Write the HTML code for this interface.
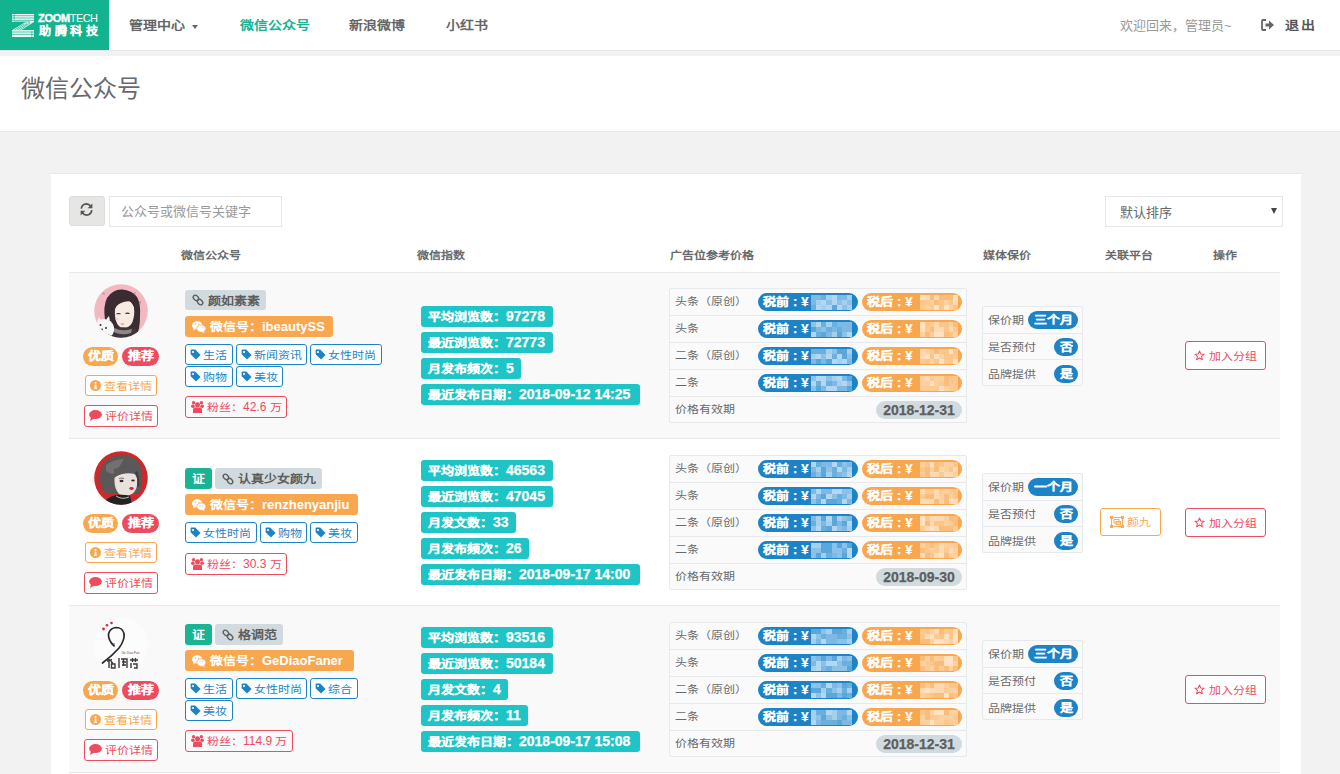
<!DOCTYPE html>
<html lang="zh-CN">
<head>
<meta charset="utf-8">
<style>
*{box-sizing:border-box;margin:0;padding:0}
html,body{width:1340px;height:774px;overflow:hidden}
body{font-family:"Liberation Sans",sans-serif;background:#f3f2f3;color:#676a6c;font-size:13px;position:relative}
.a{position:absolute}
.fx{position:absolute;display:flex;align-items:center;white-space:nowrap}
.nav{position:absolute;left:0;top:0;width:1340px;height:50px;background:#fff}
.logo{position:absolute;left:0;top:0;width:109px;height:50px;background:#12b48f}
.band{position:absolute;left:0;top:50px;width:1340px;height:6px;background:#f3f2f3;border-top:1px solid #e6e5e7}
.navi{position:absolute;top:17px;font-size:14px;font-weight:bold;color:#666;line-height:18px;white-space:nowrap}
.hdr{position:absolute;left:0;top:56px;width:1340px;height:76px;background:#fff;border-bottom:1px solid #e7eaec}
.title{position:absolute;left:21px;top:74px;font-size:24px;color:#676a6c;line-height:30px;font-weight:normal}
.panel{position:absolute;left:51px;top:173px;width:1250px;height:610px;background:#fff;border-top:1px solid #e7eaec}
.th{position:absolute;top:248px;font-size:12px;font-weight:bold;color:#676a6c;line-height:16px;white-space:nowrap}
.row{position:absolute;left:69px;width:1211px;border-top:1px solid #e7eaec}
.bdg{padding-bottom:3px;height:19px;border-radius:10px;color:#fff;font-weight:bold;font-size:13px;justify-content:center;-webkit-text-stroke:0.3px #fff}
.ob{padding-bottom:1px;border:1px solid;border-radius:3px;font-size:12px;justify-content:center;background:#fff}
.lab{padding-bottom:0;border-radius:3px;font-weight:bold;font-size:13px;padding-left:7px}
.tg{padding-bottom:1px;height:21px;border:1px solid #1c84c6;border-radius:3px;font-size:12px;color:#1c84c6;padding-left:4px;background:#fff}
.cy{height:21px;background:#1fc5c6;color:#fff;border-radius:3px;font-weight:bold;font-size:13px;padding-left:7px;padding-bottom:1px;-webkit-text-stroke:0.25px #fff}
.pbox{position:absolute;border:1px solid #e7eaec;border-radius:2px;background:#fbfafb}
.prow{position:absolute;left:0;border-bottom:1px solid #e7eaec;width:100%}
.pl{position:absolute;font-size:12px;color:#676a6c;white-space:nowrap;line-height:16px}
.pill{height:18px;border-radius:9px;color:#fff;font-weight:bold;font-size:13px;padding-left:5px;padding-bottom:2px;overflow:hidden;-webkit-text-stroke:0.25px currentColor}
.cl{margin:0 4px 0 4px}
.z{display:inline-block;transform:scaleY(.86)}
.n{font-size:14px}
</style>
</head>
<body>
<div class="nav">
<div class="logo"></div>
<svg class="a" style="left:0;top:0" width="109" height="50" viewBox="0 0 109 50">
<g fill="#fff">
<rect x="12" y="14" width="22" height="1.4"/><rect x="12" y="16.2" width="22" height="1.4"/><rect x="12" y="18.4" width="22" height="1.4"/><rect x="12" y="20.6" width="22" height="1.3"/>
<rect x="12" y="30.2" width="22" height="1.4"/><rect x="12" y="32.4" width="22" height="1.4"/><rect x="12" y="34.6" width="22" height="1.4"/><rect x="12" y="36" width="22" height="1"/>
<path d="M25.5 21.9 L34 21.9 L21 30.2 L12 30.2 Z" opacity="0.85"/>
</g>
<g stroke="#12b48f" stroke-width="0.7">
<path d="M14 21.9 L30 21.9" /><path d="M27 23.6 L17 30" /><path d="M30 23 L19.5 30" /><path d="M24 24 L14.5 30"/>
<path d="M14.2 14 L14.2 19.5"/><path d="M31.8 31 L31.8 37"/>
</g>
</svg>
<div class="a" style="left:38px;top:12px;font-size:11px;line-height:12px;color:#fff;white-space:nowrap;letter-spacing:-0.3px"><b style="font-weight:bold;-webkit-text-stroke:0.4px #fff">ZOOM</b><span style="font-weight:normal;letter-spacing:-0.6px">TECH</span></div>
<div class="a" style="left:39px;top:23.5px;font-size:12px;line-height:15px;color:#fff;font-weight:bold;white-space:nowrap;letter-spacing:3.6px;-webkit-text-stroke:0.2px #fff"><span class="z" style="transform:scaleY(.95)">助腾科技</span></div>
<div class="navi" style="left:129px"><span class="z">管理中心</span></div>
<div class="a" style="left:192px;top:25px;width:0;height:0;border-left:3.5px solid transparent;border-right:3.5px solid transparent;border-top:4px solid #666"></div>
<div class="navi" style="left:240px;color:#1ab394"><span class="z">微信公众号</span></div>
<div class="navi" style="left:349px"><span class="z">新浪微博</span></div>
<div class="navi" style="left:446px"><span class="z">小红书</span></div>
<div class="navi" style="left:1120px;font-weight:normal;color:#999;font-size:13px;top:17px">欢迎回来，管理员~</div>
<div class="a" style="left:1261px;top:19px"><svg width="14" height="12" viewBox="0 0 14 12" style="display:block;"><path d="M5 1 L2 1 Q1 1 1 2 L1 10 Q1 11 2 11 L5 11" fill="none" stroke="#666" stroke-width="1.8"/><path d="M4.5 4.4 L8 4.4 L8 1.6 L13 6 L8 10.4 L8 7.6 L4.5 7.6 Z" fill="#666"/></svg></div>
<div class="navi" style="left:1285px;color:#555;letter-spacing:1.5px"><span class="z">退出</span></div>
</div>
<div class="band"></div><div class="hdr"></div><div class="title">微信公众号</div>
<div class="panel"></div>
<div class="fx" style="left:69px;top:196px;width:36px;height:30px;background:#e6e6e4;border:1px solid #dcdcda;border-radius:3px;justify-content:center;padding-bottom:3px;padding-right:2px"><svg width="13" height="13" viewBox="0 0 13 13" style="display:block;"><path d="M1.3 5.6 Q2 1 6.5 0.9 Q9 1 10.6 3.2" fill="none" stroke="#555" stroke-width="1.7"/><path d="M12.4 0.4 L12.4 5.2 L7.6 5.2 Z" fill="#555"/><path d="M11.8 7.2 Q11 12 6.5 12.1 Q4 12 2.4 9.8" fill="none" stroke="#555" stroke-width="1.7"/><path d="M0.6 12.6 L0.6 7.8 L5.4 7.8 Z" fill="#555"/></svg></div>
<div class="fx" style="left:109px;top:196px;width:173px;height:31px;border:1px solid #e5e6e7;background:#fff;padding-left:11px;padding-bottom:3px;font-size:13px;color:#999">公众号或微信号关键字</div>
<div class="fx" style="left:1105px;top:196px;width:178px;height:31px;border:1px solid #e5e6e7;background:#fff;padding-left:14px;font-size:13px;color:#676a6c">默认排序</div>
<div class="a" style="left:1271px;top:208px;width:0;height:0;border-left:3.5px solid transparent;border-right:3.5px solid transparent;border-top:6px solid #444"></div>
<div class="th" style="left:181px"><span class="z">微信公众号</span></div>
<div class="th" style="left:417px"><span class="z">微信指数</span></div>
<div class="th" style="left:670px"><span class="z">广告位参考价格</span></div>
<div class="th" style="left:983px"><span class="z">媒体保价</span></div>
<div class="th" style="left:1105px"><span class="z">关联平台</span></div>
<div class="th" style="left:1213px"><span class="z">操作</span></div>
<div class="row" style="top:272px;height:166px;background:#faf9fa"></div>
<div class="a" style="left:94px;top:284px"><svg width="54" height="54" viewBox="0 0 54 54" style="display:block">
<defs><clipPath id="c1"><circle cx="27" cy="27" r="26.8"/></clipPath></defs>
<g clip-path="url(#c1)">
<rect width="54" height="54" fill="#f4b8c0"/>
<path d="M11 36 Q9 22 13 14 Q19 5 28 5.5 Q38 6 43 13 Q47 20 46 32 Q46 42 44 48 L36 50 L16 48 Q12 44 11 36 Z" fill="#3a2c31"/>
<path d="M21.5 22 Q24 15 32 15.5 Q38 17 40 23 Q41 31 38.5 38 Q35.5 44 29.5 44 Q24 43.5 22 37 Q20 30 21.5 22 Z" fill="#f8ece2"/>
<path d="M19 24 Q22 13 31 12.5 Q37 13 39 18 Q33 16 27 19 Q22 21 20 27 Z" fill="#3a2c31"/>
<path d="M39 17 Q42 21 42 27 L40.5 26 Q40 21 37 18 Z" fill="#3a2c31"/>
<path d="M22.5 30 Q24.5 29 26.5 30" stroke="#2a2226" stroke-width="1.1" fill="none"/>
<path d="M31.5 29.6 Q33.5 28.6 35.5 29.6" stroke="#2a2226" stroke-width="1.1" fill="none"/>
<ellipse cx="28.5" cy="40" rx="2" ry="0.8" fill="#e7938a"/>
<ellipse cx="23" cy="35" rx="1.8" ry="1" fill="#f6cfc8"/>
<path d="M15 46 Q27 41 42 45 L44 54 L13 54 Z" fill="#3f3739"/>
<path d="M20 44 Q28 48 38 45 L37 49 Q28 52 20 48 Z" fill="#8f8789"/>
<path d="M0 43 Q3 35 10 35 Q18 35.5 20 43 Q21 51 14 54 L0 54 Z" fill="#f7f7f7"/>
<path d="M3 37 L5 33 L7 36.5 Z" fill="#f7f7f7"/><path d="M12 35.5 L15 32 L16 37 Z" fill="#f7f7f7"/>
<circle cx="6.5" cy="41" r="1" fill="#333"/><circle cx="8" cy="45.5" r="1" fill="#333"/><circle cx="12" cy="44" r="1" fill="#333"/>
<path d="M8 10 L10 8 L11 11 Z" fill="#9c8f86" opacity="0.7"/><path d="M39 9 L42 8 L41 11 Z" fill="#9c8f86" opacity="0.7"/>
<path d="M45 18 L47 17 L46.5 20 Z" fill="#c65d6c" opacity="0.8"/>
</g></svg></div>
<div class="fx bdg" style="left:83px;top:347px;width:35px;height:19px;background:#f9a74f"><span class="z">优质</span></div>
<div class="fx bdg" style="left:122px;top:347px;width:37px;height:19px;background:#ee4b5e"><span class="z">推荐</span></div>
<div class="fx ob" style="left:85px;top:375px;width:72px;height:21px;border-color:#f9a74f;color:#f9a74f"><span style="margin-right:3px"><svg width="11" height="11" viewBox="0 0 12 12" style="display:block;"><circle cx="6" cy="6" r="6" fill="#f9a74f"/><rect x="5" y="5" width="2" height="4.4" fill="#fff"/><rect x="4.2" y="8.6" width="3.6" height="1" fill="#fff"/><circle cx="6" cy="3.2" r="1.1" fill="#fff"/></svg></span><span class="z">查看详情</span></div>
<div class="fx ob" style="left:84px;top:405px;width:74px;height:22px;border-color:#ee4b5e;color:#ee4b5e"><span style="margin-right:3px"><svg width="13" height="11" viewBox="0 0 13 11" style="display:block;"><ellipse cx="6.5" cy="4.6" rx="6.4" ry="4.5" fill="#ee4b5e"/><path d="M2 7 L1 11 L5.5 8.5 Z" fill="#ee4b5e"/></svg></span><span class="z">评价详情</span></div>
<div class="fx lab" style="left:185px;top:290px;width:81px;height:20px;background:#d1dade;color:#5e5e5e"><span style="margin-right:4px"><svg width="12" height="12" viewBox="0 0 12 12" style="display:block;"><ellipse cx="3.9" cy="3.9" rx="3" ry="2.2" transform="rotate(45 3.9 3.9)" fill="none" stroke="#5e5e5e" stroke-width="1.4"/><ellipse cx="8.1" cy="8.1" rx="3" ry="2.2" transform="rotate(45 8.1 8.1)" fill="none" stroke="#5e5e5e" stroke-width="1.4"/></svg></span><span class="z">颜如素素</span></div>
<div class="fx lab" style="left:185px;top:316px;width:148px;height:21px;background:#f9a74f;color:#fff"><span style="margin-right:4px"><svg width="14" height="12" viewBox="0 0 14 12" style="display:block;"><ellipse cx="5.2" cy="4.4" rx="5.2" ry="4.2" fill="#fff"/><path d="M1.6 6.8 L1.2 9.2 L4 7.8 Z" fill="#fff"/><ellipse cx="9.4" cy="7.6" rx="4.6" ry="3.7" fill="#fff" stroke="#f9a74f" stroke-width="0.8"/><path d="M11.8 10 L12.6 12 L10.2 11 Z" fill="#fff"/><circle cx="3.5" cy="3.2" r="0.6" fill="#f9a74f"/><circle cx="6.8" cy="3.2" r="0.6" fill="#f9a74f"/><circle cx="8" cy="6.8" r="0.5" fill="#f9a74f"/><circle cx="10.8" cy="6.8" r="0.5" fill="#f9a74f"/></svg></span><span class="z">微信号：</span>ibeautySS</div>
<div class="fx tg" style="left:185px;top:344px;width:48px;height:21px;"><span style="margin-right:2px"><svg width="11" height="11" viewBox="0 0 11 11" style="display:block;"><path d="M0.6 1.4 Q0.6 0.6 1.4 0.6 L5.2 0.6 L10.6 6 L6 10.6 L0.6 5.2 Z" fill="#1c84c6"/><circle cx="3" cy="3" r="1.1" fill="#fff"/></svg></span><span class="z">生活</span></div>
<div class="fx tg" style="left:236px;top:344px;width:71px;height:21px;"><span style="margin-right:2px"><svg width="11" height="11" viewBox="0 0 11 11" style="display:block;"><path d="M0.6 1.4 Q0.6 0.6 1.4 0.6 L5.2 0.6 L10.6 6 L6 10.6 L0.6 5.2 Z" fill="#1c84c6"/><circle cx="3" cy="3" r="1.1" fill="#fff"/></svg></span><span class="z">新闻资讯</span></div>
<div class="fx tg" style="left:310px;top:344px;width:72px;height:21px;"><span style="margin-right:2px"><svg width="11" height="11" viewBox="0 0 11 11" style="display:block;"><path d="M0.6 1.4 Q0.6 0.6 1.4 0.6 L5.2 0.6 L10.6 6 L6 10.6 L0.6 5.2 Z" fill="#1c84c6"/><circle cx="3" cy="3" r="1.1" fill="#fff"/></svg></span><span class="z">女性时尚</span></div>
<div class="fx tg" style="left:185px;top:366px;width:48px;height:21px;"><span style="margin-right:2px"><svg width="11" height="11" viewBox="0 0 11 11" style="display:block;"><path d="M0.6 1.4 Q0.6 0.6 1.4 0.6 L5.2 0.6 L10.6 6 L6 10.6 L0.6 5.2 Z" fill="#1c84c6"/><circle cx="3" cy="3" r="1.1" fill="#fff"/></svg></span><span class="z">购物</span></div>
<div class="fx tg" style="left:236px;top:366px;width:47px;height:21px;"><span style="margin-right:2px"><svg width="11" height="11" viewBox="0 0 11 11" style="display:block;"><path d="M0.6 1.4 Q0.6 0.6 1.4 0.6 L5.2 0.6 L10.6 6 L6 10.6 L0.6 5.2 Z" fill="#1c84c6"/><circle cx="3" cy="3" r="1.1" fill="#fff"/></svg></span><span class="z">美妆</span></div>
<div class="fx ob" style="left:185px;top:396px;width:102px;height:22px;border-color:#ee4b5e;color:#ee4b5e;font-size:12px;justify-content:flex-start;padding-left:5px;background:transparent"><span style="margin-right:3px"><svg width="13" height="12" viewBox="0 0 13 12" style="display:block;"><circle cx="2.6" cy="1.8" r="1.7" fill="#ee4b5e"/><circle cx="10.4" cy="1.8" r="1.7" fill="#ee4b5e"/><ellipse cx="1.9" cy="5.2" rx="1.9" ry="1.8" fill="#ee4b5e"/><ellipse cx="11.1" cy="5.2" rx="1.9" ry="1.8" fill="#ee4b5e"/><circle cx="6.5" cy="3.8" r="2.5" fill="#ee4b5e"/><path d="M2 12 L2 8.6 Q2 6.6 4 6.6 L9 6.6 Q11 6.6 11 8.6 L11 12 Z" fill="#ee4b5e"/></svg></span><span class="z">粉丝：</span>42.6&nbsp;<span class="z">万</span></div>
<div class="fx cy" style="left:421px;top:306px;width:132px;height:21px;"><span class="z">平均浏览数：</span><span class="n">97278</span></div>
<div class="fx cy" style="left:421px;top:332px;width:132px;height:21px;"><span class="z">最近浏览数：</span><span class="n">72773</span></div>
<div class="fx cy" style="left:421px;top:358px;width:100px;height:21px;"><span class="z">月发布频次：</span><span class="n">5</span></div>
<div class="fx cy" style="left:421px;top:384px;width:219px;height:21px;"><span class="z">最近发布日期：</span><span class="n">2018-09-12&nbsp;14:25</span></div>
<div class="pbox" style="left:669px;top:288px;width:298px;height:135px">
<div class="prow" style="top:0px;height:27px"></div>
<div class="pl" style="left:5px;top:5px"><span class="z">头条（原创）</span></div>
<div class="fx pill" style="left:88px;top:4px;width:100px;height:18px;background:#1c84c6"><span><span class="z">税前</span></span><span class="cl">:</span><span>¥</span><div style="position:absolute;left:53px;top:1.5px;width:41px;height:15px;overflow:hidden"><div style="position:absolute;left:0.0px;top:0px;width:5.5px;height:5.4px;background:#7db9e4"></div><div style="position:absolute;left:5.1px;top:0px;width:5.5px;height:5.4px;background:#7db9e4"></div><div style="position:absolute;left:10.2px;top:0px;width:5.5px;height:5.4px;background:#6ab0df"></div><div style="position:absolute;left:15.4px;top:0px;width:5.5px;height:5.4px;background:#a4cfed"></div><div style="position:absolute;left:20.5px;top:0px;width:5.5px;height:5.4px;background:#b3d7f0"></div><div style="position:absolute;left:25.6px;top:0px;width:5.5px;height:5.4px;background:#7db9e4"></div><div style="position:absolute;left:30.8px;top:0px;width:5.5px;height:5.4px;background:#7db9e4"></div><div style="position:absolute;left:35.9px;top:0px;width:5.5px;height:5.4px;background:#a4cfed"></div><div style="position:absolute;left:0.0px;top:5px;width:5.5px;height:5.4px;background:#7db9e4"></div><div style="position:absolute;left:5.1px;top:5px;width:5.5px;height:5.4px;background:#a4cfed"></div><div style="position:absolute;left:10.2px;top:5px;width:5.5px;height:5.4px;background:#b3d7f0"></div><div style="position:absolute;left:15.4px;top:5px;width:5.5px;height:5.4px;background:#8cc2e7"></div><div style="position:absolute;left:20.5px;top:5px;width:5.5px;height:5.4px;background:#b3d7f0"></div><div style="position:absolute;left:25.6px;top:5px;width:5.5px;height:5.4px;background:#8cc2e7"></div><div style="position:absolute;left:30.8px;top:5px;width:5.5px;height:5.4px;background:#a4cfed"></div><div style="position:absolute;left:35.9px;top:5px;width:5.5px;height:5.4px;background:#8cc2e7"></div><div style="position:absolute;left:0.0px;top:10px;width:5.5px;height:5.4px;background:#6ab0df"></div><div style="position:absolute;left:5.1px;top:10px;width:5.5px;height:5.4px;background:#b3d7f0"></div><div style="position:absolute;left:10.2px;top:10px;width:5.5px;height:5.4px;background:#a4cfed"></div><div style="position:absolute;left:15.4px;top:10px;width:5.5px;height:5.4px;background:#b3d7f0"></div><div style="position:absolute;left:20.5px;top:10px;width:5.5px;height:5.4px;background:#5aa7db"></div><div style="position:absolute;left:25.6px;top:10px;width:5.5px;height:5.4px;background:#b3d7f0"></div><div style="position:absolute;left:30.8px;top:10px;width:5.5px;height:5.4px;background:#8cc2e7"></div><div style="position:absolute;left:35.9px;top:10px;width:5.5px;height:5.4px;background:#a4cfed"></div></div></div>
<div class="fx pill" style="left:192px;top:4px;width:100px;height:18px;background:#f9a74f"><span><span class="z">税后</span></span><span class="cl">:</span><span>¥</span><div style="position:absolute;left:58px;top:1.5px;width:38px;height:15px;overflow:hidden"><div style="position:absolute;left:0.0px;top:0px;width:5.2px;height:5.4px;background:#fee2c2"></div><div style="position:absolute;left:4.8px;top:0px;width:5.2px;height:5.4px;background:#fddab4"></div><div style="position:absolute;left:9.5px;top:0px;width:5.2px;height:5.4px;background:#fbbd7c"></div><div style="position:absolute;left:14.2px;top:0px;width:5.2px;height:5.4px;background:#fddab4"></div><div style="position:absolute;left:19.0px;top:0px;width:5.2px;height:5.4px;background:#fbbd7c"></div><div style="position:absolute;left:23.8px;top:0px;width:5.2px;height:5.4px;background:#fbbd7c"></div><div style="position:absolute;left:28.5px;top:0px;width:5.2px;height:5.4px;background:#fbbd7c"></div><div style="position:absolute;left:33.2px;top:0px;width:5.2px;height:5.4px;background:#fee2c2"></div><div style="position:absolute;left:0.0px;top:5px;width:5.2px;height:5.4px;background:#fcc58a"></div><div style="position:absolute;left:4.8px;top:5px;width:5.2px;height:5.4px;background:#fccb94"></div><div style="position:absolute;left:9.5px;top:5px;width:5.2px;height:5.4px;background:#fdd0a0"></div><div style="position:absolute;left:14.2px;top:5px;width:5.2px;height:5.4px;background:#fbbd7c"></div><div style="position:absolute;left:19.0px;top:5px;width:5.2px;height:5.4px;background:#fcc58a"></div><div style="position:absolute;left:23.8px;top:5px;width:5.2px;height:5.4px;background:#fdd0a0"></div><div style="position:absolute;left:28.5px;top:5px;width:5.2px;height:5.4px;background:#fcc58a"></div><div style="position:absolute;left:33.2px;top:5px;width:5.2px;height:5.4px;background:#fddab4"></div><div style="position:absolute;left:0.0px;top:10px;width:5.2px;height:5.4px;background:#fccb94"></div><div style="position:absolute;left:4.8px;top:10px;width:5.2px;height:5.4px;background:#fdd0a0"></div><div style="position:absolute;left:9.5px;top:10px;width:5.2px;height:5.4px;background:#fccb94"></div><div style="position:absolute;left:14.2px;top:10px;width:5.2px;height:5.4px;background:#fee2c2"></div><div style="position:absolute;left:19.0px;top:10px;width:5.2px;height:5.4px;background:#fcc58a"></div><div style="position:absolute;left:23.8px;top:10px;width:5.2px;height:5.4px;background:#fee2c2"></div><div style="position:absolute;left:28.5px;top:10px;width:5.2px;height:5.4px;background:#fdd0a0"></div><div style="position:absolute;left:33.2px;top:10px;width:5.2px;height:5.4px;background:#fcc58a"></div></div></div>
<div class="prow" style="top:27px;height:27px"></div>
<div class="pl" style="left:5px;top:32px"><span class="z">头条</span></div>
<div class="fx pill" style="left:88px;top:31px;width:100px;height:18px;background:#1c84c6"><span><span class="z">税前</span></span><span class="cl">:</span><span>¥</span><div style="position:absolute;left:53px;top:1.5px;width:41px;height:15px;overflow:hidden"><div style="position:absolute;left:0.0px;top:0px;width:5.5px;height:5.4px;background:#8cc2e7"></div><div style="position:absolute;left:5.1px;top:0px;width:5.5px;height:5.4px;background:#b3d7f0"></div><div style="position:absolute;left:10.2px;top:0px;width:5.5px;height:5.4px;background:#6ab0df"></div><div style="position:absolute;left:15.4px;top:0px;width:5.5px;height:5.4px;background:#a4cfed"></div><div style="position:absolute;left:20.5px;top:0px;width:5.5px;height:5.4px;background:#6ab0df"></div><div style="position:absolute;left:25.6px;top:0px;width:5.5px;height:5.4px;background:#7db9e4"></div><div style="position:absolute;left:30.8px;top:0px;width:5.5px;height:5.4px;background:#7db9e4"></div><div style="position:absolute;left:35.9px;top:0px;width:5.5px;height:5.4px;background:#7db9e4"></div><div style="position:absolute;left:0.0px;top:5px;width:5.5px;height:5.4px;background:#5aa7db"></div><div style="position:absolute;left:5.1px;top:5px;width:5.5px;height:5.4px;background:#7db9e4"></div><div style="position:absolute;left:10.2px;top:5px;width:5.5px;height:5.4px;background:#8cc2e7"></div><div style="position:absolute;left:15.4px;top:5px;width:5.5px;height:5.4px;background:#6ab0df"></div><div style="position:absolute;left:20.5px;top:5px;width:5.5px;height:5.4px;background:#7db9e4"></div><div style="position:absolute;left:25.6px;top:5px;width:5.5px;height:5.4px;background:#6ab0df"></div><div style="position:absolute;left:30.8px;top:5px;width:5.5px;height:5.4px;background:#7db9e4"></div><div style="position:absolute;left:35.9px;top:5px;width:5.5px;height:5.4px;background:#7db9e4"></div><div style="position:absolute;left:0.0px;top:10px;width:5.5px;height:5.4px;background:#b3d7f0"></div><div style="position:absolute;left:5.1px;top:10px;width:5.5px;height:5.4px;background:#6ab0df"></div><div style="position:absolute;left:10.2px;top:10px;width:5.5px;height:5.4px;background:#5aa7db"></div><div style="position:absolute;left:15.4px;top:10px;width:5.5px;height:5.4px;background:#7db9e4"></div><div style="position:absolute;left:20.5px;top:10px;width:5.5px;height:5.4px;background:#a4cfed"></div><div style="position:absolute;left:25.6px;top:10px;width:5.5px;height:5.4px;background:#5aa7db"></div><div style="position:absolute;left:30.8px;top:10px;width:5.5px;height:5.4px;background:#8cc2e7"></div><div style="position:absolute;left:35.9px;top:10px;width:5.5px;height:5.4px;background:#b3d7f0"></div></div></div>
<div class="fx pill" style="left:192px;top:31px;width:100px;height:18px;background:#f9a74f"><span><span class="z">税后</span></span><span class="cl">:</span><span>¥</span><div style="position:absolute;left:58px;top:1.5px;width:38px;height:15px;overflow:hidden"><div style="position:absolute;left:0.0px;top:0px;width:5.2px;height:5.4px;background:#fee2c2"></div><div style="position:absolute;left:4.8px;top:0px;width:5.2px;height:5.4px;background:#fcc58a"></div><div style="position:absolute;left:9.5px;top:0px;width:5.2px;height:5.4px;background:#fccb94"></div><div style="position:absolute;left:14.2px;top:0px;width:5.2px;height:5.4px;background:#fddab4"></div><div style="position:absolute;left:19.0px;top:0px;width:5.2px;height:5.4px;background:#fcc58a"></div><div style="position:absolute;left:23.8px;top:0px;width:5.2px;height:5.4px;background:#fcc58a"></div><div style="position:absolute;left:28.5px;top:0px;width:5.2px;height:5.4px;background:#fdd0a0"></div><div style="position:absolute;left:33.2px;top:0px;width:5.2px;height:5.4px;background:#fbbd7c"></div><div style="position:absolute;left:0.0px;top:5px;width:5.2px;height:5.4px;background:#fee2c2"></div><div style="position:absolute;left:4.8px;top:5px;width:5.2px;height:5.4px;background:#fccb94"></div><div style="position:absolute;left:9.5px;top:5px;width:5.2px;height:5.4px;background:#fbbd7c"></div><div style="position:absolute;left:14.2px;top:5px;width:5.2px;height:5.4px;background:#fddab4"></div><div style="position:absolute;left:19.0px;top:5px;width:5.2px;height:5.4px;background:#fddab4"></div><div style="position:absolute;left:23.8px;top:5px;width:5.2px;height:5.4px;background:#fcc58a"></div><div style="position:absolute;left:28.5px;top:5px;width:5.2px;height:5.4px;background:#fddab4"></div><div style="position:absolute;left:33.2px;top:5px;width:5.2px;height:5.4px;background:#fccb94"></div><div style="position:absolute;left:0.0px;top:10px;width:5.2px;height:5.4px;background:#fdd0a0"></div><div style="position:absolute;left:4.8px;top:10px;width:5.2px;height:5.4px;background:#fbbd7c"></div><div style="position:absolute;left:9.5px;top:10px;width:5.2px;height:5.4px;background:#fccb94"></div><div style="position:absolute;left:14.2px;top:10px;width:5.2px;height:5.4px;background:#fee2c2"></div><div style="position:absolute;left:19.0px;top:10px;width:5.2px;height:5.4px;background:#fee2c2"></div><div style="position:absolute;left:23.8px;top:10px;width:5.2px;height:5.4px;background:#fbbd7c"></div><div style="position:absolute;left:28.5px;top:10px;width:5.2px;height:5.4px;background:#fcc58a"></div><div style="position:absolute;left:33.2px;top:10px;width:5.2px;height:5.4px;background:#fdd0a0"></div></div></div>
<div class="prow" style="top:54px;height:27px"></div>
<div class="pl" style="left:5px;top:59px"><span class="z">二条（原创）</span></div>
<div class="fx pill" style="left:88px;top:58px;width:100px;height:18px;background:#1c84c6"><span><span class="z">税前</span></span><span class="cl">:</span><span>¥</span><div style="position:absolute;left:53px;top:1.5px;width:41px;height:15px;overflow:hidden"><div style="position:absolute;left:0.0px;top:0px;width:5.5px;height:5.4px;background:#6ab0df"></div><div style="position:absolute;left:5.1px;top:0px;width:5.5px;height:5.4px;background:#6ab0df"></div><div style="position:absolute;left:10.2px;top:0px;width:5.5px;height:5.4px;background:#6ab0df"></div><div style="position:absolute;left:15.4px;top:0px;width:5.5px;height:5.4px;background:#a4cfed"></div><div style="position:absolute;left:20.5px;top:0px;width:5.5px;height:5.4px;background:#8cc2e7"></div><div style="position:absolute;left:25.6px;top:0px;width:5.5px;height:5.4px;background:#5aa7db"></div><div style="position:absolute;left:30.8px;top:0px;width:5.5px;height:5.4px;background:#5aa7db"></div><div style="position:absolute;left:35.9px;top:0px;width:5.5px;height:5.4px;background:#a4cfed"></div><div style="position:absolute;left:0.0px;top:5px;width:5.5px;height:5.4px;background:#a4cfed"></div><div style="position:absolute;left:5.1px;top:5px;width:5.5px;height:5.4px;background:#b3d7f0"></div><div style="position:absolute;left:10.2px;top:5px;width:5.5px;height:5.4px;background:#8cc2e7"></div><div style="position:absolute;left:15.4px;top:5px;width:5.5px;height:5.4px;background:#b3d7f0"></div><div style="position:absolute;left:20.5px;top:5px;width:5.5px;height:5.4px;background:#6ab0df"></div><div style="position:absolute;left:25.6px;top:5px;width:5.5px;height:5.4px;background:#b3d7f0"></div><div style="position:absolute;left:30.8px;top:5px;width:5.5px;height:5.4px;background:#5aa7db"></div><div style="position:absolute;left:35.9px;top:5px;width:5.5px;height:5.4px;background:#8cc2e7"></div><div style="position:absolute;left:0.0px;top:10px;width:5.5px;height:5.4px;background:#7db9e4"></div><div style="position:absolute;left:5.1px;top:10px;width:5.5px;height:5.4px;background:#5aa7db"></div><div style="position:absolute;left:10.2px;top:10px;width:5.5px;height:5.4px;background:#7db9e4"></div><div style="position:absolute;left:15.4px;top:10px;width:5.5px;height:5.4px;background:#5aa7db"></div><div style="position:absolute;left:20.5px;top:10px;width:5.5px;height:5.4px;background:#b3d7f0"></div><div style="position:absolute;left:25.6px;top:10px;width:5.5px;height:5.4px;background:#a4cfed"></div><div style="position:absolute;left:30.8px;top:10px;width:5.5px;height:5.4px;background:#b3d7f0"></div><div style="position:absolute;left:35.9px;top:10px;width:5.5px;height:5.4px;background:#7db9e4"></div></div></div>
<div class="fx pill" style="left:192px;top:58px;width:100px;height:18px;background:#f9a74f"><span><span class="z">税后</span></span><span class="cl">:</span><span>¥</span><div style="position:absolute;left:58px;top:1.5px;width:38px;height:15px;overflow:hidden"><div style="position:absolute;left:0.0px;top:0px;width:5.2px;height:5.4px;background:#fddab4"></div><div style="position:absolute;left:4.8px;top:0px;width:5.2px;height:5.4px;background:#fdd0a0"></div><div style="position:absolute;left:9.5px;top:0px;width:5.2px;height:5.4px;background:#fccb94"></div><div style="position:absolute;left:14.2px;top:0px;width:5.2px;height:5.4px;background:#fbbd7c"></div><div style="position:absolute;left:19.0px;top:0px;width:5.2px;height:5.4px;background:#fcc58a"></div><div style="position:absolute;left:23.8px;top:0px;width:5.2px;height:5.4px;background:#fcc58a"></div><div style="position:absolute;left:28.5px;top:0px;width:5.2px;height:5.4px;background:#fee2c2"></div><div style="position:absolute;left:33.2px;top:0px;width:5.2px;height:5.4px;background:#fcc58a"></div><div style="position:absolute;left:0.0px;top:5px;width:5.2px;height:5.4px;background:#fddab4"></div><div style="position:absolute;left:4.8px;top:5px;width:5.2px;height:5.4px;background:#fee2c2"></div><div style="position:absolute;left:9.5px;top:5px;width:5.2px;height:5.4px;background:#fcc58a"></div><div style="position:absolute;left:14.2px;top:5px;width:5.2px;height:5.4px;background:#fee2c2"></div><div style="position:absolute;left:19.0px;top:5px;width:5.2px;height:5.4px;background:#fdd0a0"></div><div style="position:absolute;left:23.8px;top:5px;width:5.2px;height:5.4px;background:#fcc58a"></div><div style="position:absolute;left:28.5px;top:5px;width:5.2px;height:5.4px;background:#fcc58a"></div><div style="position:absolute;left:33.2px;top:5px;width:5.2px;height:5.4px;background:#fccb94"></div><div style="position:absolute;left:0.0px;top:10px;width:5.2px;height:5.4px;background:#fccb94"></div><div style="position:absolute;left:4.8px;top:10px;width:5.2px;height:5.4px;background:#fcc58a"></div><div style="position:absolute;left:9.5px;top:10px;width:5.2px;height:5.4px;background:#fdd0a0"></div><div style="position:absolute;left:14.2px;top:10px;width:5.2px;height:5.4px;background:#fcc58a"></div><div style="position:absolute;left:19.0px;top:10px;width:5.2px;height:5.4px;background:#fee2c2"></div><div style="position:absolute;left:23.8px;top:10px;width:5.2px;height:5.4px;background:#fccb94"></div><div style="position:absolute;left:28.5px;top:10px;width:5.2px;height:5.4px;background:#fcc58a"></div><div style="position:absolute;left:33.2px;top:10px;width:5.2px;height:5.4px;background:#fee2c2"></div></div></div>
<div class="prow" style="top:81px;height:27px"></div>
<div class="pl" style="left:5px;top:86px"><span class="z">二条</span></div>
<div class="fx pill" style="left:88px;top:85px;width:100px;height:18px;background:#1c84c6"><span><span class="z">税前</span></span><span class="cl">:</span><span>¥</span><div style="position:absolute;left:53px;top:1.5px;width:41px;height:15px;overflow:hidden"><div style="position:absolute;left:0.0px;top:0px;width:5.5px;height:5.4px;background:#8cc2e7"></div><div style="position:absolute;left:5.1px;top:0px;width:5.5px;height:5.4px;background:#b3d7f0"></div><div style="position:absolute;left:10.2px;top:0px;width:5.5px;height:5.4px;background:#b3d7f0"></div><div style="position:absolute;left:15.4px;top:0px;width:5.5px;height:5.4px;background:#8cc2e7"></div><div style="position:absolute;left:20.5px;top:0px;width:5.5px;height:5.4px;background:#a4cfed"></div><div style="position:absolute;left:25.6px;top:0px;width:5.5px;height:5.4px;background:#b3d7f0"></div><div style="position:absolute;left:30.8px;top:0px;width:5.5px;height:5.4px;background:#7db9e4"></div><div style="position:absolute;left:35.9px;top:0px;width:5.5px;height:5.4px;background:#5aa7db"></div><div style="position:absolute;left:0.0px;top:5px;width:5.5px;height:5.4px;background:#b3d7f0"></div><div style="position:absolute;left:5.1px;top:5px;width:5.5px;height:5.4px;background:#6ab0df"></div><div style="position:absolute;left:10.2px;top:5px;width:5.5px;height:5.4px;background:#b3d7f0"></div><div style="position:absolute;left:15.4px;top:5px;width:5.5px;height:5.4px;background:#6ab0df"></div><div style="position:absolute;left:20.5px;top:5px;width:5.5px;height:5.4px;background:#7db9e4"></div><div style="position:absolute;left:25.6px;top:5px;width:5.5px;height:5.4px;background:#a4cfed"></div><div style="position:absolute;left:30.8px;top:5px;width:5.5px;height:5.4px;background:#b3d7f0"></div><div style="position:absolute;left:35.9px;top:5px;width:5.5px;height:5.4px;background:#8cc2e7"></div><div style="position:absolute;left:0.0px;top:10px;width:5.5px;height:5.4px;background:#8cc2e7"></div><div style="position:absolute;left:5.1px;top:10px;width:5.5px;height:5.4px;background:#5aa7db"></div><div style="position:absolute;left:10.2px;top:10px;width:5.5px;height:5.4px;background:#7db9e4"></div><div style="position:absolute;left:15.4px;top:10px;width:5.5px;height:5.4px;background:#b3d7f0"></div><div style="position:absolute;left:20.5px;top:10px;width:5.5px;height:5.4px;background:#b3d7f0"></div><div style="position:absolute;left:25.6px;top:10px;width:5.5px;height:5.4px;background:#7db9e4"></div><div style="position:absolute;left:30.8px;top:10px;width:5.5px;height:5.4px;background:#7db9e4"></div><div style="position:absolute;left:35.9px;top:10px;width:5.5px;height:5.4px;background:#5aa7db"></div></div></div>
<div class="fx pill" style="left:192px;top:85px;width:100px;height:18px;background:#f9a74f"><span><span class="z">税后</span></span><span class="cl">:</span><span>¥</span><div style="position:absolute;left:58px;top:1.5px;width:38px;height:15px;overflow:hidden"><div style="position:absolute;left:0.0px;top:0px;width:5.2px;height:5.4px;background:#fdd0a0"></div><div style="position:absolute;left:4.8px;top:0px;width:5.2px;height:5.4px;background:#fddab4"></div><div style="position:absolute;left:9.5px;top:0px;width:5.2px;height:5.4px;background:#fccb94"></div><div style="position:absolute;left:14.2px;top:0px;width:5.2px;height:5.4px;background:#fdd0a0"></div><div style="position:absolute;left:19.0px;top:0px;width:5.2px;height:5.4px;background:#fdd0a0"></div><div style="position:absolute;left:23.8px;top:0px;width:5.2px;height:5.4px;background:#fbbd7c"></div><div style="position:absolute;left:28.5px;top:0px;width:5.2px;height:5.4px;background:#fcc58a"></div><div style="position:absolute;left:33.2px;top:0px;width:5.2px;height:5.4px;background:#fcc58a"></div><div style="position:absolute;left:0.0px;top:5px;width:5.2px;height:5.4px;background:#fdd0a0"></div><div style="position:absolute;left:4.8px;top:5px;width:5.2px;height:5.4px;background:#fdd0a0"></div><div style="position:absolute;left:9.5px;top:5px;width:5.2px;height:5.4px;background:#fee2c2"></div><div style="position:absolute;left:14.2px;top:5px;width:5.2px;height:5.4px;background:#fdd0a0"></div><div style="position:absolute;left:19.0px;top:5px;width:5.2px;height:5.4px;background:#fccb94"></div><div style="position:absolute;left:23.8px;top:5px;width:5.2px;height:5.4px;background:#fbbd7c"></div><div style="position:absolute;left:28.5px;top:5px;width:5.2px;height:5.4px;background:#fcc58a"></div><div style="position:absolute;left:33.2px;top:5px;width:5.2px;height:5.4px;background:#fccb94"></div><div style="position:absolute;left:0.0px;top:10px;width:5.2px;height:5.4px;background:#fccb94"></div><div style="position:absolute;left:4.8px;top:10px;width:5.2px;height:5.4px;background:#fccb94"></div><div style="position:absolute;left:9.5px;top:10px;width:5.2px;height:5.4px;background:#fccb94"></div><div style="position:absolute;left:14.2px;top:10px;width:5.2px;height:5.4px;background:#fccb94"></div><div style="position:absolute;left:19.0px;top:10px;width:5.2px;height:5.4px;background:#fee2c2"></div><div style="position:absolute;left:23.8px;top:10px;width:5.2px;height:5.4px;background:#fdd0a0"></div><div style="position:absolute;left:28.5px;top:10px;width:5.2px;height:5.4px;background:#fccb94"></div><div style="position:absolute;left:33.2px;top:10px;width:5.2px;height:5.4px;background:#fcc58a"></div></div></div>
<div class="pl" style="left:5px;top:113px"><span class="z">价格有效期</span></div>
<div class="fx pill" style="left:206px;top:112px;width:86px;height:18px;background:#d1dade;color:#5e5e5e;justify-content:center;padding-left:0;padding-bottom:0;font-size:14px">2018-12-31</div>
</div>
<div class="pbox" style="left:982px;top:306px;width:101px;height:80px">
<div class="prow" style="top:0px;height:27px"></div>
<div class="pl" style="left:5px;top:6px"><span class="z">保价期</span></div>
<div class="fx pill" style="left:45px;top:4px;width:50px;height:18px;background:#1c84c6;justify-content:center;padding-left:0"><span class="z">三个月</span></div>
<div class="prow" style="top:26px;height:27px"></div>
<div class="pl" style="left:5px;top:33px"><span class="z">是否预付</span></div>
<div class="fx pill" style="left:71px;top:31px;width:24px;height:18px;background:#1c84c6;justify-content:center;padding-left:0"><span class="z">否</span></div>
<div class="pl" style="left:5px;top:60px"><span class="z">品牌提供</span></div>
<div class="fx pill" style="left:71px;top:58px;width:24px;height:18px;background:#1c84c6;justify-content:center;padding-left:0"><span class="z">是</span></div>
</div>
<div class="fx ob" style="left:1185px;top:341px;width:81px;height:29px;border-color:#ee4b5e;color:#ee4b5e"><span style="margin-right:4px"><svg width="11" height="11" viewBox="0 0 12 12" style="display:block;"><path d="M6 1 L7.4 4.3 L11 4.6 L8.3 7 L9.1 10.6 L6 8.7 L2.9 10.6 L3.7 7 L1 4.6 L4.6 4.3 Z" fill="none" stroke="#ee4b5e" stroke-width="1.1" stroke-linejoin="round"/></svg></span><span class="z">加入分组</span></div>
<div class="row" style="top:438px;height:167px;background:#fff"></div>
<div class="a" style="left:94px;top:451px"><svg width="54" height="54" viewBox="0 0 54 54" style="display:block">
<defs><clipPath id="c2"><circle cx="27" cy="27" r="26.8"/></clipPath></defs>
<g clip-path="url(#c2)">
<rect width="54" height="54" fill="#c92a2c"/>
<path d="M6 30 Q5 12 18 6 Q30 2 40 7 Q49 13 48 28 Q47.5 36 45 42 L30 44 L12 42 Q7 38 6 30 Z" fill="#5a5859"/>
<path d="M12 14 Q20 8 30 8 Q26 14 22 22 Q16 24 12 20 Z" fill="#727070"/>
<path d="M20.5 25 Q28 22 37 21 Q43 23 43.5 30 Q43.5 39 38 43 Q31 46 25 43 Q20.5 38 20.5 30 Z" fill="#e8e1dd"/>
<path d="M20 18 Q30 14 40 16 Q44 19 45 24 Q36 21 28 23 Q23 24.5 20 27 Z" fill="#5a5859"/>
<path d="M43 20 Q46 26 45 36 L43 35 Q44 27 41 21 Z" fill="#3e3c3d"/>
<ellipse cx="27.5" cy="30" rx="2" ry="1.2" fill="#3b2a2a"/><ellipse cx="39" cy="29.5" rx="1.8" ry="1.1" fill="#3b2a2a"/>
<path d="M25 27.5 Q27.5 26.5 30 27.5" stroke="#5a4a4a" stroke-width="0.8" fill="none"/>
<ellipse cx="37.5" cy="37.5" rx="2.2" ry="1.4" fill="#e4252c"/>
<path d="M10 54 Q12 46 22 44 Q30 43 36 45 L38 54 Z" fill="#242122"/>
<path d="M22 45 Q28 49 35 46" stroke="#d9d4d4" stroke-width="0.9" fill="none"/>
</g></svg></div>
<div class="fx bdg" style="left:83px;top:514px;width:35px;height:19px;background:#f9a74f"><span class="z">优质</span></div>
<div class="fx bdg" style="left:122px;top:514px;width:37px;height:19px;background:#ee4b5e"><span class="z">推荐</span></div>
<div class="fx ob" style="left:85px;top:542px;width:72px;height:21px;border-color:#f9a74f;color:#f9a74f"><span style="margin-right:3px"><svg width="11" height="11" viewBox="0 0 12 12" style="display:block;"><circle cx="6" cy="6" r="6" fill="#f9a74f"/><rect x="5" y="5" width="2" height="4.4" fill="#fff"/><rect x="4.2" y="8.6" width="3.6" height="1" fill="#fff"/><circle cx="6" cy="3.2" r="1.1" fill="#fff"/></svg></span><span class="z">查看详情</span></div>
<div class="fx ob" style="left:84px;top:572px;width:74px;height:22px;border-color:#ee4b5e;color:#ee4b5e"><span style="margin-right:3px"><svg width="13" height="11" viewBox="0 0 13 11" style="display:block;"><ellipse cx="6.5" cy="4.6" rx="6.4" ry="4.5" fill="#ee4b5e"/><path d="M2 7 L1 11 L5.5 8.5 Z" fill="#ee4b5e"/></svg></span><span class="z">评价详情</span></div>
<div class="fx lab" style="left:185px;top:468px;width:27px;height:21px;background:#1ab394;color:#fff;padding-left:0;justify-content:center"><span class="z">证</span></div>
<div class="fx lab" style="left:215px;top:468px;width:107px;height:21px;background:#d1dade;color:#5e5e5e"><span style="margin-right:4px"><svg width="12" height="12" viewBox="0 0 12 12" style="display:block;"><ellipse cx="3.9" cy="3.9" rx="3" ry="2.2" transform="rotate(45 3.9 3.9)" fill="none" stroke="#5e5e5e" stroke-width="1.4"/><ellipse cx="8.1" cy="8.1" rx="3" ry="2.2" transform="rotate(45 8.1 8.1)" fill="none" stroke="#5e5e5e" stroke-width="1.4"/></svg></span><span class="z">认真少女颜九</span></div>
<div class="fx lab" style="left:185px;top:494px;width:173px;height:21px;background:#f9a74f;color:#fff"><span style="margin-right:4px"><svg width="14" height="12" viewBox="0 0 14 12" style="display:block;"><ellipse cx="5.2" cy="4.4" rx="5.2" ry="4.2" fill="#fff"/><path d="M1.6 6.8 L1.2 9.2 L4 7.8 Z" fill="#fff"/><ellipse cx="9.4" cy="7.6" rx="4.6" ry="3.7" fill="#fff" stroke="#f9a74f" stroke-width="0.8"/><path d="M11.8 10 L12.6 12 L10.2 11 Z" fill="#fff"/><circle cx="3.5" cy="3.2" r="0.6" fill="#f9a74f"/><circle cx="6.8" cy="3.2" r="0.6" fill="#f9a74f"/><circle cx="8" cy="6.8" r="0.5" fill="#f9a74f"/><circle cx="10.8" cy="6.8" r="0.5" fill="#f9a74f"/></svg></span><span class="z">微信号：</span>renzhenyanjiu</div>
<div class="fx tg" style="left:185px;top:522px;width:72px;height:21px;"><span style="margin-right:2px"><svg width="11" height="11" viewBox="0 0 11 11" style="display:block;"><path d="M0.6 1.4 Q0.6 0.6 1.4 0.6 L5.2 0.6 L10.6 6 L6 10.6 L0.6 5.2 Z" fill="#1c84c6"/><circle cx="3" cy="3" r="1.1" fill="#fff"/></svg></span><span class="z">女性时尚</span></div>
<div class="fx tg" style="left:260px;top:522px;width:47px;height:21px;"><span style="margin-right:2px"><svg width="11" height="11" viewBox="0 0 11 11" style="display:block;"><path d="M0.6 1.4 Q0.6 0.6 1.4 0.6 L5.2 0.6 L10.6 6 L6 10.6 L0.6 5.2 Z" fill="#1c84c6"/><circle cx="3" cy="3" r="1.1" fill="#fff"/></svg></span><span class="z">购物</span></div>
<div class="fx tg" style="left:310px;top:522px;width:48px;height:21px;"><span style="margin-right:2px"><svg width="11" height="11" viewBox="0 0 11 11" style="display:block;"><path d="M0.6 1.4 Q0.6 0.6 1.4 0.6 L5.2 0.6 L10.6 6 L6 10.6 L0.6 5.2 Z" fill="#1c84c6"/><circle cx="3" cy="3" r="1.1" fill="#fff"/></svg></span><span class="z">美妆</span></div>
<div class="fx ob" style="left:185px;top:553px;width:102px;height:22px;border-color:#ee4b5e;color:#ee4b5e;font-size:12px;justify-content:flex-start;padding-left:5px;background:transparent"><span style="margin-right:3px"><svg width="13" height="12" viewBox="0 0 13 12" style="display:block;"><circle cx="2.6" cy="1.8" r="1.7" fill="#ee4b5e"/><circle cx="10.4" cy="1.8" r="1.7" fill="#ee4b5e"/><ellipse cx="1.9" cy="5.2" rx="1.9" ry="1.8" fill="#ee4b5e"/><ellipse cx="11.1" cy="5.2" rx="1.9" ry="1.8" fill="#ee4b5e"/><circle cx="6.5" cy="3.8" r="2.5" fill="#ee4b5e"/><path d="M2 12 L2 8.6 Q2 6.6 4 6.6 L9 6.6 Q11 6.6 11 8.6 L11 12 Z" fill="#ee4b5e"/></svg></span><span class="z">粉丝：</span>30.3&nbsp;<span class="z">万</span></div>
<div class="fx cy" style="left:421px;top:460px;width:132px;height:21px;"><span class="z">平均浏览数：</span><span class="n">46563</span></div>
<div class="fx cy" style="left:421px;top:486px;width:132px;height:21px;"><span class="z">最近浏览数：</span><span class="n">47045</span></div>
<div class="fx cy" style="left:421px;top:512px;width:95px;height:21px;"><span class="z">月发文数：</span><span class="n">33</span></div>
<div class="fx cy" style="left:421px;top:538px;width:108px;height:21px;"><span class="z">月发布频次：</span><span class="n">26</span></div>
<div class="fx cy" style="left:421px;top:564px;width:219px;height:21px;"><span class="z">最近发布日期：</span><span class="n">2018-09-17&nbsp;14:00</span></div>
<div class="pbox" style="left:669px;top:455px;width:298px;height:135px">
<div class="prow" style="top:0px;height:27px"></div>
<div class="pl" style="left:5px;top:5px"><span class="z">头条（原创）</span></div>
<div class="fx pill" style="left:88px;top:4px;width:100px;height:18px;background:#1c84c6"><span><span class="z">税前</span></span><span class="cl">:</span><span>¥</span><div style="position:absolute;left:53px;top:1.5px;width:41px;height:15px;overflow:hidden"><div style="position:absolute;left:0.0px;top:0px;width:5.5px;height:5.4px;background:#b3d7f0"></div><div style="position:absolute;left:5.1px;top:0px;width:5.5px;height:5.4px;background:#6ab0df"></div><div style="position:absolute;left:10.2px;top:0px;width:5.5px;height:5.4px;background:#7db9e4"></div><div style="position:absolute;left:15.4px;top:0px;width:5.5px;height:5.4px;background:#7db9e4"></div><div style="position:absolute;left:20.5px;top:0px;width:5.5px;height:5.4px;background:#b3d7f0"></div><div style="position:absolute;left:25.6px;top:0px;width:5.5px;height:5.4px;background:#6ab0df"></div><div style="position:absolute;left:30.8px;top:0px;width:5.5px;height:5.4px;background:#8cc2e7"></div><div style="position:absolute;left:35.9px;top:0px;width:5.5px;height:5.4px;background:#7db9e4"></div><div style="position:absolute;left:0.0px;top:5px;width:5.5px;height:5.4px;background:#7db9e4"></div><div style="position:absolute;left:5.1px;top:5px;width:5.5px;height:5.4px;background:#a4cfed"></div><div style="position:absolute;left:10.2px;top:5px;width:5.5px;height:5.4px;background:#5aa7db"></div><div style="position:absolute;left:15.4px;top:5px;width:5.5px;height:5.4px;background:#8cc2e7"></div><div style="position:absolute;left:20.5px;top:5px;width:5.5px;height:5.4px;background:#6ab0df"></div><div style="position:absolute;left:25.6px;top:5px;width:5.5px;height:5.4px;background:#b3d7f0"></div><div style="position:absolute;left:30.8px;top:5px;width:5.5px;height:5.4px;background:#7db9e4"></div><div style="position:absolute;left:35.9px;top:5px;width:5.5px;height:5.4px;background:#a4cfed"></div><div style="position:absolute;left:0.0px;top:10px;width:5.5px;height:5.4px;background:#6ab0df"></div><div style="position:absolute;left:5.1px;top:10px;width:5.5px;height:5.4px;background:#8cc2e7"></div><div style="position:absolute;left:10.2px;top:10px;width:5.5px;height:5.4px;background:#5aa7db"></div><div style="position:absolute;left:15.4px;top:10px;width:5.5px;height:5.4px;background:#a4cfed"></div><div style="position:absolute;left:20.5px;top:10px;width:5.5px;height:5.4px;background:#6ab0df"></div><div style="position:absolute;left:25.6px;top:10px;width:5.5px;height:5.4px;background:#7db9e4"></div><div style="position:absolute;left:30.8px;top:10px;width:5.5px;height:5.4px;background:#8cc2e7"></div><div style="position:absolute;left:35.9px;top:10px;width:5.5px;height:5.4px;background:#b3d7f0"></div></div></div>
<div class="fx pill" style="left:192px;top:4px;width:100px;height:18px;background:#f9a74f"><span><span class="z">税后</span></span><span class="cl">:</span><span>¥</span><div style="position:absolute;left:58px;top:1.5px;width:38px;height:15px;overflow:hidden"><div style="position:absolute;left:0.0px;top:0px;width:5.2px;height:5.4px;background:#fdd0a0"></div><div style="position:absolute;left:4.8px;top:0px;width:5.2px;height:5.4px;background:#fcc58a"></div><div style="position:absolute;left:9.5px;top:0px;width:5.2px;height:5.4px;background:#fee2c2"></div><div style="position:absolute;left:14.2px;top:0px;width:5.2px;height:5.4px;background:#fbbd7c"></div><div style="position:absolute;left:19.0px;top:0px;width:5.2px;height:5.4px;background:#fcc58a"></div><div style="position:absolute;left:23.8px;top:0px;width:5.2px;height:5.4px;background:#fdd0a0"></div><div style="position:absolute;left:28.5px;top:0px;width:5.2px;height:5.4px;background:#fdd0a0"></div><div style="position:absolute;left:33.2px;top:0px;width:5.2px;height:5.4px;background:#fcc58a"></div><div style="position:absolute;left:0.0px;top:5px;width:5.2px;height:5.4px;background:#fcc58a"></div><div style="position:absolute;left:4.8px;top:5px;width:5.2px;height:5.4px;background:#fbbd7c"></div><div style="position:absolute;left:9.5px;top:5px;width:5.2px;height:5.4px;background:#fdd0a0"></div><div style="position:absolute;left:14.2px;top:5px;width:5.2px;height:5.4px;background:#fbbd7c"></div><div style="position:absolute;left:19.0px;top:5px;width:5.2px;height:5.4px;background:#fddab4"></div><div style="position:absolute;left:23.8px;top:5px;width:5.2px;height:5.4px;background:#fdd0a0"></div><div style="position:absolute;left:28.5px;top:5px;width:5.2px;height:5.4px;background:#fcc58a"></div><div style="position:absolute;left:33.2px;top:5px;width:5.2px;height:5.4px;background:#fddab4"></div><div style="position:absolute;left:0.0px;top:10px;width:5.2px;height:5.4px;background:#fccb94"></div><div style="position:absolute;left:4.8px;top:10px;width:5.2px;height:5.4px;background:#fbbd7c"></div><div style="position:absolute;left:9.5px;top:10px;width:5.2px;height:5.4px;background:#fddab4"></div><div style="position:absolute;left:14.2px;top:10px;width:5.2px;height:5.4px;background:#fddab4"></div><div style="position:absolute;left:19.0px;top:10px;width:5.2px;height:5.4px;background:#fccb94"></div><div style="position:absolute;left:23.8px;top:10px;width:5.2px;height:5.4px;background:#fddab4"></div><div style="position:absolute;left:28.5px;top:10px;width:5.2px;height:5.4px;background:#fddab4"></div><div style="position:absolute;left:33.2px;top:10px;width:5.2px;height:5.4px;background:#fdd0a0"></div></div></div>
<div class="prow" style="top:27px;height:27px"></div>
<div class="pl" style="left:5px;top:32px"><span class="z">头条</span></div>
<div class="fx pill" style="left:88px;top:31px;width:100px;height:18px;background:#1c84c6"><span><span class="z">税前</span></span><span class="cl">:</span><span>¥</span><div style="position:absolute;left:53px;top:1.5px;width:41px;height:15px;overflow:hidden"><div style="position:absolute;left:0.0px;top:0px;width:5.5px;height:5.4px;background:#7db9e4"></div><div style="position:absolute;left:5.1px;top:0px;width:5.5px;height:5.4px;background:#b3d7f0"></div><div style="position:absolute;left:10.2px;top:0px;width:5.5px;height:5.4px;background:#7db9e4"></div><div style="position:absolute;left:15.4px;top:0px;width:5.5px;height:5.4px;background:#7db9e4"></div><div style="position:absolute;left:20.5px;top:0px;width:5.5px;height:5.4px;background:#b3d7f0"></div><div style="position:absolute;left:25.6px;top:0px;width:5.5px;height:5.4px;background:#b3d7f0"></div><div style="position:absolute;left:30.8px;top:0px;width:5.5px;height:5.4px;background:#8cc2e7"></div><div style="position:absolute;left:35.9px;top:0px;width:5.5px;height:5.4px;background:#8cc2e7"></div><div style="position:absolute;left:0.0px;top:5px;width:5.5px;height:5.4px;background:#b3d7f0"></div><div style="position:absolute;left:5.1px;top:5px;width:5.5px;height:5.4px;background:#7db9e4"></div><div style="position:absolute;left:10.2px;top:5px;width:5.5px;height:5.4px;background:#5aa7db"></div><div style="position:absolute;left:15.4px;top:5px;width:5.5px;height:5.4px;background:#b3d7f0"></div><div style="position:absolute;left:20.5px;top:5px;width:5.5px;height:5.4px;background:#8cc2e7"></div><div style="position:absolute;left:25.6px;top:5px;width:5.5px;height:5.4px;background:#6ab0df"></div><div style="position:absolute;left:30.8px;top:5px;width:5.5px;height:5.4px;background:#7db9e4"></div><div style="position:absolute;left:35.9px;top:5px;width:5.5px;height:5.4px;background:#a4cfed"></div><div style="position:absolute;left:0.0px;top:10px;width:5.5px;height:5.4px;background:#8cc2e7"></div><div style="position:absolute;left:5.1px;top:10px;width:5.5px;height:5.4px;background:#6ab0df"></div><div style="position:absolute;left:10.2px;top:10px;width:5.5px;height:5.4px;background:#b3d7f0"></div><div style="position:absolute;left:15.4px;top:10px;width:5.5px;height:5.4px;background:#5aa7db"></div><div style="position:absolute;left:20.5px;top:10px;width:5.5px;height:5.4px;background:#5aa7db"></div><div style="position:absolute;left:25.6px;top:10px;width:5.5px;height:5.4px;background:#6ab0df"></div><div style="position:absolute;left:30.8px;top:10px;width:5.5px;height:5.4px;background:#b3d7f0"></div><div style="position:absolute;left:35.9px;top:10px;width:5.5px;height:5.4px;background:#7db9e4"></div></div></div>
<div class="fx pill" style="left:192px;top:31px;width:100px;height:18px;background:#f9a74f"><span><span class="z">税后</span></span><span class="cl">:</span><span>¥</span><div style="position:absolute;left:58px;top:1.5px;width:38px;height:15px;overflow:hidden"><div style="position:absolute;left:0.0px;top:0px;width:5.2px;height:5.4px;background:#fddab4"></div><div style="position:absolute;left:4.8px;top:0px;width:5.2px;height:5.4px;background:#fccb94"></div><div style="position:absolute;left:9.5px;top:0px;width:5.2px;height:5.4px;background:#fccb94"></div><div style="position:absolute;left:14.2px;top:0px;width:5.2px;height:5.4px;background:#fddab4"></div><div style="position:absolute;left:19.0px;top:0px;width:5.2px;height:5.4px;background:#fccb94"></div><div style="position:absolute;left:23.8px;top:0px;width:5.2px;height:5.4px;background:#fdd0a0"></div><div style="position:absolute;left:28.5px;top:0px;width:5.2px;height:5.4px;background:#fccb94"></div><div style="position:absolute;left:33.2px;top:0px;width:5.2px;height:5.4px;background:#fcc58a"></div><div style="position:absolute;left:0.0px;top:5px;width:5.2px;height:5.4px;background:#fccb94"></div><div style="position:absolute;left:4.8px;top:5px;width:5.2px;height:5.4px;background:#fbbd7c"></div><div style="position:absolute;left:9.5px;top:5px;width:5.2px;height:5.4px;background:#fbbd7c"></div><div style="position:absolute;left:14.2px;top:5px;width:5.2px;height:5.4px;background:#fddab4"></div><div style="position:absolute;left:19.0px;top:5px;width:5.2px;height:5.4px;background:#fdd0a0"></div><div style="position:absolute;left:23.8px;top:5px;width:5.2px;height:5.4px;background:#fbbd7c"></div><div style="position:absolute;left:28.5px;top:5px;width:5.2px;height:5.4px;background:#fdd0a0"></div><div style="position:absolute;left:33.2px;top:5px;width:5.2px;height:5.4px;background:#fcc58a"></div><div style="position:absolute;left:0.0px;top:10px;width:5.2px;height:5.4px;background:#fddab4"></div><div style="position:absolute;left:4.8px;top:10px;width:5.2px;height:5.4px;background:#fddab4"></div><div style="position:absolute;left:9.5px;top:10px;width:5.2px;height:5.4px;background:#fddab4"></div><div style="position:absolute;left:14.2px;top:10px;width:5.2px;height:5.4px;background:#fbbd7c"></div><div style="position:absolute;left:19.0px;top:10px;width:5.2px;height:5.4px;background:#fdd0a0"></div><div style="position:absolute;left:23.8px;top:10px;width:5.2px;height:5.4px;background:#fbbd7c"></div><div style="position:absolute;left:28.5px;top:10px;width:5.2px;height:5.4px;background:#fee2c2"></div><div style="position:absolute;left:33.2px;top:10px;width:5.2px;height:5.4px;background:#fddab4"></div></div></div>
<div class="prow" style="top:54px;height:27px"></div>
<div class="pl" style="left:5px;top:59px"><span class="z">二条（原创）</span></div>
<div class="fx pill" style="left:88px;top:58px;width:100px;height:18px;background:#1c84c6"><span><span class="z">税前</span></span><span class="cl">:</span><span>¥</span><div style="position:absolute;left:53px;top:1.5px;width:41px;height:15px;overflow:hidden"><div style="position:absolute;left:0.0px;top:0px;width:5.5px;height:5.4px;background:#7db9e4"></div><div style="position:absolute;left:5.1px;top:0px;width:5.5px;height:5.4px;background:#a4cfed"></div><div style="position:absolute;left:10.2px;top:0px;width:5.5px;height:5.4px;background:#5aa7db"></div><div style="position:absolute;left:15.4px;top:0px;width:5.5px;height:5.4px;background:#b3d7f0"></div><div style="position:absolute;left:20.5px;top:0px;width:5.5px;height:5.4px;background:#5aa7db"></div><div style="position:absolute;left:25.6px;top:0px;width:5.5px;height:5.4px;background:#a4cfed"></div><div style="position:absolute;left:30.8px;top:0px;width:5.5px;height:5.4px;background:#8cc2e7"></div><div style="position:absolute;left:35.9px;top:0px;width:5.5px;height:5.4px;background:#7db9e4"></div><div style="position:absolute;left:0.0px;top:5px;width:5.5px;height:5.4px;background:#6ab0df"></div><div style="position:absolute;left:5.1px;top:5px;width:5.5px;height:5.4px;background:#a4cfed"></div><div style="position:absolute;left:10.2px;top:5px;width:5.5px;height:5.4px;background:#7db9e4"></div><div style="position:absolute;left:15.4px;top:5px;width:5.5px;height:5.4px;background:#a4cfed"></div><div style="position:absolute;left:20.5px;top:5px;width:5.5px;height:5.4px;background:#5aa7db"></div><div style="position:absolute;left:25.6px;top:5px;width:5.5px;height:5.4px;background:#7db9e4"></div><div style="position:absolute;left:30.8px;top:5px;width:5.5px;height:5.4px;background:#5aa7db"></div><div style="position:absolute;left:35.9px;top:5px;width:5.5px;height:5.4px;background:#b3d7f0"></div><div style="position:absolute;left:0.0px;top:10px;width:5.5px;height:5.4px;background:#8cc2e7"></div><div style="position:absolute;left:5.1px;top:10px;width:5.5px;height:5.4px;background:#b3d7f0"></div><div style="position:absolute;left:10.2px;top:10px;width:5.5px;height:5.4px;background:#6ab0df"></div><div style="position:absolute;left:15.4px;top:10px;width:5.5px;height:5.4px;background:#5aa7db"></div><div style="position:absolute;left:20.5px;top:10px;width:5.5px;height:5.4px;background:#b3d7f0"></div><div style="position:absolute;left:25.6px;top:10px;width:5.5px;height:5.4px;background:#8cc2e7"></div><div style="position:absolute;left:30.8px;top:10px;width:5.5px;height:5.4px;background:#7db9e4"></div><div style="position:absolute;left:35.9px;top:10px;width:5.5px;height:5.4px;background:#a4cfed"></div></div></div>
<div class="fx pill" style="left:192px;top:58px;width:100px;height:18px;background:#f9a74f"><span><span class="z">税后</span></span><span class="cl">:</span><span>¥</span><div style="position:absolute;left:58px;top:1.5px;width:38px;height:15px;overflow:hidden"><div style="position:absolute;left:0.0px;top:0px;width:5.2px;height:5.4px;background:#fee2c2"></div><div style="position:absolute;left:4.8px;top:0px;width:5.2px;height:5.4px;background:#fccb94"></div><div style="position:absolute;left:9.5px;top:0px;width:5.2px;height:5.4px;background:#fddab4"></div><div style="position:absolute;left:14.2px;top:0px;width:5.2px;height:5.4px;background:#fddab4"></div><div style="position:absolute;left:19.0px;top:0px;width:5.2px;height:5.4px;background:#fddab4"></div><div style="position:absolute;left:23.8px;top:0px;width:5.2px;height:5.4px;background:#fdd0a0"></div><div style="position:absolute;left:28.5px;top:0px;width:5.2px;height:5.4px;background:#fbbd7c"></div><div style="position:absolute;left:33.2px;top:0px;width:5.2px;height:5.4px;background:#fbbd7c"></div><div style="position:absolute;left:0.0px;top:5px;width:5.2px;height:5.4px;background:#fee2c2"></div><div style="position:absolute;left:4.8px;top:5px;width:5.2px;height:5.4px;background:#fbbd7c"></div><div style="position:absolute;left:9.5px;top:5px;width:5.2px;height:5.4px;background:#fddab4"></div><div style="position:absolute;left:14.2px;top:5px;width:5.2px;height:5.4px;background:#fcc58a"></div><div style="position:absolute;left:19.0px;top:5px;width:5.2px;height:5.4px;background:#fcc58a"></div><div style="position:absolute;left:23.8px;top:5px;width:5.2px;height:5.4px;background:#fdd0a0"></div><div style="position:absolute;left:28.5px;top:5px;width:5.2px;height:5.4px;background:#fccb94"></div><div style="position:absolute;left:33.2px;top:5px;width:5.2px;height:5.4px;background:#fbbd7c"></div><div style="position:absolute;left:0.0px;top:10px;width:5.2px;height:5.4px;background:#fccb94"></div><div style="position:absolute;left:4.8px;top:10px;width:5.2px;height:5.4px;background:#fddab4"></div><div style="position:absolute;left:9.5px;top:10px;width:5.2px;height:5.4px;background:#fee2c2"></div><div style="position:absolute;left:14.2px;top:10px;width:5.2px;height:5.4px;background:#fddab4"></div><div style="position:absolute;left:19.0px;top:10px;width:5.2px;height:5.4px;background:#fbbd7c"></div><div style="position:absolute;left:23.8px;top:10px;width:5.2px;height:5.4px;background:#fbbd7c"></div><div style="position:absolute;left:28.5px;top:10px;width:5.2px;height:5.4px;background:#fbbd7c"></div><div style="position:absolute;left:33.2px;top:10px;width:5.2px;height:5.4px;background:#fccb94"></div></div></div>
<div class="prow" style="top:81px;height:27px"></div>
<div class="pl" style="left:5px;top:86px"><span class="z">二条</span></div>
<div class="fx pill" style="left:88px;top:85px;width:100px;height:18px;background:#1c84c6"><span><span class="z">税前</span></span><span class="cl">:</span><span>¥</span><div style="position:absolute;left:53px;top:1.5px;width:41px;height:15px;overflow:hidden"><div style="position:absolute;left:0.0px;top:0px;width:5.5px;height:5.4px;background:#a4cfed"></div><div style="position:absolute;left:5.1px;top:0px;width:5.5px;height:5.4px;background:#a4cfed"></div><div style="position:absolute;left:10.2px;top:0px;width:5.5px;height:5.4px;background:#5aa7db"></div><div style="position:absolute;left:15.4px;top:0px;width:5.5px;height:5.4px;background:#5aa7db"></div><div style="position:absolute;left:20.5px;top:0px;width:5.5px;height:5.4px;background:#8cc2e7"></div><div style="position:absolute;left:25.6px;top:0px;width:5.5px;height:5.4px;background:#5aa7db"></div><div style="position:absolute;left:30.8px;top:0px;width:5.5px;height:5.4px;background:#8cc2e7"></div><div style="position:absolute;left:35.9px;top:0px;width:5.5px;height:5.4px;background:#5aa7db"></div><div style="position:absolute;left:0.0px;top:5px;width:5.5px;height:5.4px;background:#8cc2e7"></div><div style="position:absolute;left:5.1px;top:5px;width:5.5px;height:5.4px;background:#8cc2e7"></div><div style="position:absolute;left:10.2px;top:5px;width:5.5px;height:5.4px;background:#5aa7db"></div><div style="position:absolute;left:15.4px;top:5px;width:5.5px;height:5.4px;background:#5aa7db"></div><div style="position:absolute;left:20.5px;top:5px;width:5.5px;height:5.4px;background:#8cc2e7"></div><div style="position:absolute;left:25.6px;top:5px;width:5.5px;height:5.4px;background:#8cc2e7"></div><div style="position:absolute;left:30.8px;top:5px;width:5.5px;height:5.4px;background:#6ab0df"></div><div style="position:absolute;left:35.9px;top:5px;width:5.5px;height:5.4px;background:#b3d7f0"></div><div style="position:absolute;left:0.0px;top:10px;width:5.5px;height:5.4px;background:#8cc2e7"></div><div style="position:absolute;left:5.1px;top:10px;width:5.5px;height:5.4px;background:#5aa7db"></div><div style="position:absolute;left:10.2px;top:10px;width:5.5px;height:5.4px;background:#a4cfed"></div><div style="position:absolute;left:15.4px;top:10px;width:5.5px;height:5.4px;background:#6ab0df"></div><div style="position:absolute;left:20.5px;top:10px;width:5.5px;height:5.4px;background:#7db9e4"></div><div style="position:absolute;left:25.6px;top:10px;width:5.5px;height:5.4px;background:#8cc2e7"></div><div style="position:absolute;left:30.8px;top:10px;width:5.5px;height:5.4px;background:#5aa7db"></div><div style="position:absolute;left:35.9px;top:10px;width:5.5px;height:5.4px;background:#b3d7f0"></div></div></div>
<div class="fx pill" style="left:192px;top:85px;width:100px;height:18px;background:#f9a74f"><span><span class="z">税后</span></span><span class="cl">:</span><span>¥</span><div style="position:absolute;left:58px;top:1.5px;width:38px;height:15px;overflow:hidden"><div style="position:absolute;left:0.0px;top:0px;width:5.2px;height:5.4px;background:#fdd0a0"></div><div style="position:absolute;left:4.8px;top:0px;width:5.2px;height:5.4px;background:#fcc58a"></div><div style="position:absolute;left:9.5px;top:0px;width:5.2px;height:5.4px;background:#fbbd7c"></div><div style="position:absolute;left:14.2px;top:0px;width:5.2px;height:5.4px;background:#fccb94"></div><div style="position:absolute;left:19.0px;top:0px;width:5.2px;height:5.4px;background:#fddab4"></div><div style="position:absolute;left:23.8px;top:0px;width:5.2px;height:5.4px;background:#fdd0a0"></div><div style="position:absolute;left:28.5px;top:0px;width:5.2px;height:5.4px;background:#fdd0a0"></div><div style="position:absolute;left:33.2px;top:0px;width:5.2px;height:5.4px;background:#fccb94"></div><div style="position:absolute;left:0.0px;top:5px;width:5.2px;height:5.4px;background:#fbbd7c"></div><div style="position:absolute;left:4.8px;top:5px;width:5.2px;height:5.4px;background:#fccb94"></div><div style="position:absolute;left:9.5px;top:5px;width:5.2px;height:5.4px;background:#fdd0a0"></div><div style="position:absolute;left:14.2px;top:5px;width:5.2px;height:5.4px;background:#fccb94"></div><div style="position:absolute;left:19.0px;top:5px;width:5.2px;height:5.4px;background:#fddab4"></div><div style="position:absolute;left:23.8px;top:5px;width:5.2px;height:5.4px;background:#fccb94"></div><div style="position:absolute;left:28.5px;top:5px;width:5.2px;height:5.4px;background:#fddab4"></div><div style="position:absolute;left:33.2px;top:5px;width:5.2px;height:5.4px;background:#fdd0a0"></div><div style="position:absolute;left:0.0px;top:10px;width:5.2px;height:5.4px;background:#fddab4"></div><div style="position:absolute;left:4.8px;top:10px;width:5.2px;height:5.4px;background:#fbbd7c"></div><div style="position:absolute;left:9.5px;top:10px;width:5.2px;height:5.4px;background:#fcc58a"></div><div style="position:absolute;left:14.2px;top:10px;width:5.2px;height:5.4px;background:#fddab4"></div><div style="position:absolute;left:19.0px;top:10px;width:5.2px;height:5.4px;background:#fee2c2"></div><div style="position:absolute;left:23.8px;top:10px;width:5.2px;height:5.4px;background:#fbbd7c"></div><div style="position:absolute;left:28.5px;top:10px;width:5.2px;height:5.4px;background:#fdd0a0"></div><div style="position:absolute;left:33.2px;top:10px;width:5.2px;height:5.4px;background:#fdd0a0"></div></div></div>
<div class="pl" style="left:5px;top:113px"><span class="z">价格有效期</span></div>
<div class="fx pill" style="left:206px;top:112px;width:86px;height:18px;background:#d1dade;color:#5e5e5e;justify-content:center;padding-left:0;padding-bottom:0;font-size:14px">2018-09-30</div>
</div>
<div class="pbox" style="left:982px;top:473px;width:101px;height:80px">
<div class="prow" style="top:0px;height:27px"></div>
<div class="pl" style="left:5px;top:6px"><span class="z">保价期</span></div>
<div class="fx pill" style="left:45px;top:4px;width:50px;height:18px;background:#1c84c6;justify-content:center;padding-left:0"><span class="z">一个月</span></div>
<div class="prow" style="top:26px;height:27px"></div>
<div class="pl" style="left:5px;top:33px"><span class="z">是否预付</span></div>
<div class="fx pill" style="left:71px;top:31px;width:24px;height:18px;background:#1c84c6;justify-content:center;padding-left:0"><span class="z">否</span></div>
<div class="pl" style="left:5px;top:60px"><span class="z">品牌提供</span></div>
<div class="fx pill" style="left:71px;top:58px;width:24px;height:18px;background:#1c84c6;justify-content:center;padding-left:0"><span class="z">是</span></div>
</div>
<div class="fx ob" style="left:1100px;top:508px;width:61px;height:28px;border-color:#f9a74f;color:#f9a74f"><span style="margin-right:3px"><svg width="14" height="12" viewBox="0 0 14 12" style="display:block;"><rect x="1.5" y="1.5" width="11" height="9" fill="none" stroke="#f8ac59" stroke-width="1.1"/><rect x="0" y="0" width="3" height="3" fill="#f8ac59"/><rect x="11" y="0" width="3" height="3" fill="#f8ac59"/><rect x="0" y="9" width="3" height="3" fill="#f8ac59"/><rect x="11" y="9" width="3" height="3" fill="#f8ac59"/><rect x="4" y="3.5" width="5" height="3.5" fill="none" stroke="#f8ac59" stroke-width="1"/><rect x="6" y="5.5" width="4.5" height="3.2" fill="none" stroke="#f8ac59" stroke-width="1"/></svg></span><span class="z">颜九</span></div>
<div class="fx ob" style="left:1185px;top:508px;width:81px;height:29px;border-color:#ee4b5e;color:#ee4b5e"><span style="margin-right:4px"><svg width="11" height="11" viewBox="0 0 12 12" style="display:block;"><path d="M6 1 L7.4 4.3 L11 4.6 L8.3 7 L9.1 10.6 L6 8.7 L2.9 10.6 L3.7 7 L1 4.6 L4.6 4.3 Z" fill="none" stroke="#ee4b5e" stroke-width="1.1" stroke-linejoin="round"/></svg></span><span class="z">加入分组</span></div>
<div class="row" style="top:605px;height:168px;background:#faf9fa;border-bottom:1px solid #e7eaec"></div>
<div class="a" style="left:94px;top:618px"><svg width="54" height="54" viewBox="0 0 54 54" style="display:block">
<circle cx="27" cy="27" r="27" fill="#fcfcfc"/>
<circle cx="9.5" cy="11" r="1.4" fill="#d42a30"/><circle cx="13" cy="7.3" r="1.3" fill="#d42a30"/><circle cx="17.5" cy="5" r="1.3" fill="#d42a30"/>
<path d="M20 28 Q14 22 14.5 16 Q16 10 22 9.5 Q28.5 9.5 30 15.5 Q31 22 25 30 Q18 38 8.5 45" fill="none" stroke="#2c2728" stroke-width="1.7" stroke-linecap="round"/>
<path d="M20 28 L20 25" stroke="#2c2728" stroke-width="0.8"/>
<text x="27.5" y="35.5" font-size="3.2" fill="#555" font-family="Liberation Sans,sans-serif">Ge Diao Fan</text>
<g fill="none" stroke="#3e393a" stroke-width="1.4">
<path d="M15 41 L15 50 M13 43 L17 42 M17.5 41 Q16 44 19 45 M17.5 46 L21 46 L21 50 L17.5 50 Z"/>
<path d="M25 40 L25 50 M27 41 L33 41 L33 50 M28 44 L32 44 M28 47 L32 47 M29.5 41 L29.5 48"/>
<path d="M36 42 L44 42 M38.5 40 L38.5 44 M41.5 40 L41.5 44 M37 45 L37 50 M39 46 L43 46 L43 50 L40 50"/>
</g>
</svg></div>
<div class="fx bdg" style="left:83px;top:681px;width:35px;height:19px;background:#f9a74f"><span class="z">优质</span></div>
<div class="fx bdg" style="left:122px;top:681px;width:37px;height:19px;background:#ee4b5e"><span class="z">推荐</span></div>
<div class="fx ob" style="left:85px;top:709px;width:72px;height:21px;border-color:#f9a74f;color:#f9a74f"><span style="margin-right:3px"><svg width="11" height="11" viewBox="0 0 12 12" style="display:block;"><circle cx="6" cy="6" r="6" fill="#f9a74f"/><rect x="5" y="5" width="2" height="4.4" fill="#fff"/><rect x="4.2" y="8.6" width="3.6" height="1" fill="#fff"/><circle cx="6" cy="3.2" r="1.1" fill="#fff"/></svg></span><span class="z">查看详情</span></div>
<div class="fx ob" style="left:84px;top:739px;width:74px;height:22px;border-color:#ee4b5e;color:#ee4b5e"><span style="margin-right:3px"><svg width="13" height="11" viewBox="0 0 13 11" style="display:block;"><ellipse cx="6.5" cy="4.6" rx="6.4" ry="4.5" fill="#ee4b5e"/><path d="M2 7 L1 11 L5.5 8.5 Z" fill="#ee4b5e"/></svg></span><span class="z">评价详情</span></div>
<div class="fx lab" style="left:185px;top:624px;width:27px;height:21px;background:#1ab394;color:#fff;padding-left:0;justify-content:center"><span class="z">证</span></div>
<div class="fx lab" style="left:215px;top:624px;width:68px;height:21px;background:#d1dade;color:#5e5e5e"><span style="margin-right:4px"><svg width="12" height="12" viewBox="0 0 12 12" style="display:block;"><ellipse cx="3.9" cy="3.9" rx="3" ry="2.2" transform="rotate(45 3.9 3.9)" fill="none" stroke="#5e5e5e" stroke-width="1.4"/><ellipse cx="8.1" cy="8.1" rx="3" ry="2.2" transform="rotate(45 8.1 8.1)" fill="none" stroke="#5e5e5e" stroke-width="1.4"/></svg></span><span class="z">格调范</span></div>
<div class="fx lab" style="left:185px;top:650px;width:169px;height:21px;background:#f9a74f;color:#fff"><span style="margin-right:4px"><svg width="14" height="12" viewBox="0 0 14 12" style="display:block;"><ellipse cx="5.2" cy="4.4" rx="5.2" ry="4.2" fill="#fff"/><path d="M1.6 6.8 L1.2 9.2 L4 7.8 Z" fill="#fff"/><ellipse cx="9.4" cy="7.6" rx="4.6" ry="3.7" fill="#fff" stroke="#f9a74f" stroke-width="0.8"/><path d="M11.8 10 L12.6 12 L10.2 11 Z" fill="#fff"/><circle cx="3.5" cy="3.2" r="0.6" fill="#f9a74f"/><circle cx="6.8" cy="3.2" r="0.6" fill="#f9a74f"/><circle cx="8" cy="6.8" r="0.5" fill="#f9a74f"/><circle cx="10.8" cy="6.8" r="0.5" fill="#f9a74f"/></svg></span><span class="z">微信号：</span>GeDiaoFaner</div>
<div class="fx tg" style="left:185px;top:678px;width:48px;height:21px;"><span style="margin-right:2px"><svg width="11" height="11" viewBox="0 0 11 11" style="display:block;"><path d="M0.6 1.4 Q0.6 0.6 1.4 0.6 L5.2 0.6 L10.6 6 L6 10.6 L0.6 5.2 Z" fill="#1c84c6"/><circle cx="3" cy="3" r="1.1" fill="#fff"/></svg></span><span class="z">生活</span></div>
<div class="fx tg" style="left:236px;top:678px;width:71px;height:21px;"><span style="margin-right:2px"><svg width="11" height="11" viewBox="0 0 11 11" style="display:block;"><path d="M0.6 1.4 Q0.6 0.6 1.4 0.6 L5.2 0.6 L10.6 6 L6 10.6 L0.6 5.2 Z" fill="#1c84c6"/><circle cx="3" cy="3" r="1.1" fill="#fff"/></svg></span><span class="z">女性时尚</span></div>
<div class="fx tg" style="left:310px;top:678px;width:48px;height:21px;"><span style="margin-right:2px"><svg width="11" height="11" viewBox="0 0 11 11" style="display:block;"><path d="M0.6 1.4 Q0.6 0.6 1.4 0.6 L5.2 0.6 L10.6 6 L6 10.6 L0.6 5.2 Z" fill="#1c84c6"/><circle cx="3" cy="3" r="1.1" fill="#fff"/></svg></span><span class="z">综合</span></div>
<div class="fx tg" style="left:185px;top:700px;width:48px;height:21px;"><span style="margin-right:2px"><svg width="11" height="11" viewBox="0 0 11 11" style="display:block;"><path d="M0.6 1.4 Q0.6 0.6 1.4 0.6 L5.2 0.6 L10.6 6 L6 10.6 L0.6 5.2 Z" fill="#1c84c6"/><circle cx="3" cy="3" r="1.1" fill="#fff"/></svg></span><span class="z">美妆</span></div>
<div class="fx ob" style="left:185px;top:730px;width:108px;height:22px;border-color:#ee4b5e;color:#ee4b5e;font-size:12px;justify-content:flex-start;padding-left:5px;background:transparent"><span style="margin-right:3px"><svg width="13" height="12" viewBox="0 0 13 12" style="display:block;"><circle cx="2.6" cy="1.8" r="1.7" fill="#ee4b5e"/><circle cx="10.4" cy="1.8" r="1.7" fill="#ee4b5e"/><ellipse cx="1.9" cy="5.2" rx="1.9" ry="1.8" fill="#ee4b5e"/><ellipse cx="11.1" cy="5.2" rx="1.9" ry="1.8" fill="#ee4b5e"/><circle cx="6.5" cy="3.8" r="2.5" fill="#ee4b5e"/><path d="M2 12 L2 8.6 Q2 6.6 4 6.6 L9 6.6 Q11 6.6 11 8.6 L11 12 Z" fill="#ee4b5e"/></svg></span><span class="z">粉丝：</span>114.9&nbsp;<span class="z">万</span></div>
<div class="fx cy" style="left:421px;top:627px;width:132px;height:21px;"><span class="z">平均浏览数：</span><span class="n">93516</span></div>
<div class="fx cy" style="left:421px;top:653px;width:132px;height:21px;"><span class="z">最近浏览数：</span><span class="n">50184</span></div>
<div class="fx cy" style="left:421px;top:679px;width:87px;height:21px;"><span class="z">月发文数：</span><span class="n">4</span></div>
<div class="fx cy" style="left:421px;top:705px;width:107px;height:21px;"><span class="z">月发布频次：</span><span class="n">11</span></div>
<div class="fx cy" style="left:421px;top:731px;width:219px;height:21px;"><span class="z">最近发布日期：</span><span class="n">2018-09-17&nbsp;15:08</span></div>
<div class="pbox" style="left:669px;top:622px;width:298px;height:135px">
<div class="prow" style="top:0px;height:27px"></div>
<div class="pl" style="left:5px;top:5px"><span class="z">头条（原创）</span></div>
<div class="fx pill" style="left:88px;top:4px;width:100px;height:18px;background:#1c84c6"><span><span class="z">税前</span></span><span class="cl">:</span><span>¥</span><div style="position:absolute;left:53px;top:1.5px;width:41px;height:15px;overflow:hidden"><div style="position:absolute;left:0.0px;top:0px;width:5.5px;height:5.4px;background:#5aa7db"></div><div style="position:absolute;left:5.1px;top:0px;width:5.5px;height:5.4px;background:#5aa7db"></div><div style="position:absolute;left:10.2px;top:0px;width:5.5px;height:5.4px;background:#8cc2e7"></div><div style="position:absolute;left:15.4px;top:0px;width:5.5px;height:5.4px;background:#a4cfed"></div><div style="position:absolute;left:20.5px;top:0px;width:5.5px;height:5.4px;background:#5aa7db"></div><div style="position:absolute;left:25.6px;top:0px;width:5.5px;height:5.4px;background:#5aa7db"></div><div style="position:absolute;left:30.8px;top:0px;width:5.5px;height:5.4px;background:#6ab0df"></div><div style="position:absolute;left:35.9px;top:0px;width:5.5px;height:5.4px;background:#a4cfed"></div><div style="position:absolute;left:0.0px;top:5px;width:5.5px;height:5.4px;background:#b3d7f0"></div><div style="position:absolute;left:5.1px;top:5px;width:5.5px;height:5.4px;background:#8cc2e7"></div><div style="position:absolute;left:10.2px;top:5px;width:5.5px;height:5.4px;background:#6ab0df"></div><div style="position:absolute;left:15.4px;top:5px;width:5.5px;height:5.4px;background:#7db9e4"></div><div style="position:absolute;left:20.5px;top:5px;width:5.5px;height:5.4px;background:#7db9e4"></div><div style="position:absolute;left:25.6px;top:5px;width:5.5px;height:5.4px;background:#6ab0df"></div><div style="position:absolute;left:30.8px;top:5px;width:5.5px;height:5.4px;background:#6ab0df"></div><div style="position:absolute;left:35.9px;top:5px;width:5.5px;height:5.4px;background:#8cc2e7"></div><div style="position:absolute;left:0.0px;top:10px;width:5.5px;height:5.4px;background:#a4cfed"></div><div style="position:absolute;left:5.1px;top:10px;width:5.5px;height:5.4px;background:#7db9e4"></div><div style="position:absolute;left:10.2px;top:10px;width:5.5px;height:5.4px;background:#b3d7f0"></div><div style="position:absolute;left:15.4px;top:10px;width:5.5px;height:5.4px;background:#7db9e4"></div><div style="position:absolute;left:20.5px;top:10px;width:5.5px;height:5.4px;background:#7db9e4"></div><div style="position:absolute;left:25.6px;top:10px;width:5.5px;height:5.4px;background:#8cc2e7"></div><div style="position:absolute;left:30.8px;top:10px;width:5.5px;height:5.4px;background:#8cc2e7"></div><div style="position:absolute;left:35.9px;top:10px;width:5.5px;height:5.4px;background:#a4cfed"></div></div></div>
<div class="fx pill" style="left:192px;top:4px;width:100px;height:18px;background:#f9a74f"><span><span class="z">税后</span></span><span class="cl">:</span><span>¥</span><div style="position:absolute;left:58px;top:1.5px;width:38px;height:15px;overflow:hidden"><div style="position:absolute;left:0.0px;top:0px;width:5.2px;height:5.4px;background:#fccb94"></div><div style="position:absolute;left:4.8px;top:0px;width:5.2px;height:5.4px;background:#fcc58a"></div><div style="position:absolute;left:9.5px;top:0px;width:5.2px;height:5.4px;background:#fdd0a0"></div><div style="position:absolute;left:14.2px;top:0px;width:5.2px;height:5.4px;background:#fddab4"></div><div style="position:absolute;left:19.0px;top:0px;width:5.2px;height:5.4px;background:#fbbd7c"></div><div style="position:absolute;left:23.8px;top:0px;width:5.2px;height:5.4px;background:#fccb94"></div><div style="position:absolute;left:28.5px;top:0px;width:5.2px;height:5.4px;background:#fcc58a"></div><div style="position:absolute;left:33.2px;top:0px;width:5.2px;height:5.4px;background:#fddab4"></div><div style="position:absolute;left:0.0px;top:5px;width:5.2px;height:5.4px;background:#fcc58a"></div><div style="position:absolute;left:4.8px;top:5px;width:5.2px;height:5.4px;background:#fddab4"></div><div style="position:absolute;left:9.5px;top:5px;width:5.2px;height:5.4px;background:#fee2c2"></div><div style="position:absolute;left:14.2px;top:5px;width:5.2px;height:5.4px;background:#fccb94"></div><div style="position:absolute;left:19.0px;top:5px;width:5.2px;height:5.4px;background:#fcc58a"></div><div style="position:absolute;left:23.8px;top:5px;width:5.2px;height:5.4px;background:#fee2c2"></div><div style="position:absolute;left:28.5px;top:5px;width:5.2px;height:5.4px;background:#fcc58a"></div><div style="position:absolute;left:33.2px;top:5px;width:5.2px;height:5.4px;background:#fee2c2"></div><div style="position:absolute;left:0.0px;top:10px;width:5.2px;height:5.4px;background:#fbbd7c"></div><div style="position:absolute;left:4.8px;top:10px;width:5.2px;height:5.4px;background:#fbbd7c"></div><div style="position:absolute;left:9.5px;top:10px;width:5.2px;height:5.4px;background:#fdd0a0"></div><div style="position:absolute;left:14.2px;top:10px;width:5.2px;height:5.4px;background:#fee2c2"></div><div style="position:absolute;left:19.0px;top:10px;width:5.2px;height:5.4px;background:#fee2c2"></div><div style="position:absolute;left:23.8px;top:10px;width:5.2px;height:5.4px;background:#fddab4"></div><div style="position:absolute;left:28.5px;top:10px;width:5.2px;height:5.4px;background:#fdd0a0"></div><div style="position:absolute;left:33.2px;top:10px;width:5.2px;height:5.4px;background:#fee2c2"></div></div></div>
<div class="prow" style="top:27px;height:27px"></div>
<div class="pl" style="left:5px;top:32px"><span class="z">头条</span></div>
<div class="fx pill" style="left:88px;top:31px;width:100px;height:18px;background:#1c84c6"><span><span class="z">税前</span></span><span class="cl">:</span><span>¥</span><div style="position:absolute;left:53px;top:1.5px;width:41px;height:15px;overflow:hidden"><div style="position:absolute;left:0.0px;top:0px;width:5.5px;height:5.4px;background:#8cc2e7"></div><div style="position:absolute;left:5.1px;top:0px;width:5.5px;height:5.4px;background:#7db9e4"></div><div style="position:absolute;left:10.2px;top:0px;width:5.5px;height:5.4px;background:#5aa7db"></div><div style="position:absolute;left:15.4px;top:0px;width:5.5px;height:5.4px;background:#7db9e4"></div><div style="position:absolute;left:20.5px;top:0px;width:5.5px;height:5.4px;background:#5aa7db"></div><div style="position:absolute;left:25.6px;top:0px;width:5.5px;height:5.4px;background:#a4cfed"></div><div style="position:absolute;left:30.8px;top:0px;width:5.5px;height:5.4px;background:#7db9e4"></div><div style="position:absolute;left:35.9px;top:0px;width:5.5px;height:5.4px;background:#8cc2e7"></div><div style="position:absolute;left:0.0px;top:5px;width:5.5px;height:5.4px;background:#7db9e4"></div><div style="position:absolute;left:5.1px;top:5px;width:5.5px;height:5.4px;background:#b3d7f0"></div><div style="position:absolute;left:10.2px;top:5px;width:5.5px;height:5.4px;background:#8cc2e7"></div><div style="position:absolute;left:15.4px;top:5px;width:5.5px;height:5.4px;background:#b3d7f0"></div><div style="position:absolute;left:20.5px;top:5px;width:5.5px;height:5.4px;background:#b3d7f0"></div><div style="position:absolute;left:25.6px;top:5px;width:5.5px;height:5.4px;background:#8cc2e7"></div><div style="position:absolute;left:30.8px;top:5px;width:5.5px;height:5.4px;background:#6ab0df"></div><div style="position:absolute;left:35.9px;top:5px;width:5.5px;height:5.4px;background:#6ab0df"></div><div style="position:absolute;left:0.0px;top:10px;width:5.5px;height:5.4px;background:#a4cfed"></div><div style="position:absolute;left:5.1px;top:10px;width:5.5px;height:5.4px;background:#b3d7f0"></div><div style="position:absolute;left:10.2px;top:10px;width:5.5px;height:5.4px;background:#7db9e4"></div><div style="position:absolute;left:15.4px;top:10px;width:5.5px;height:5.4px;background:#6ab0df"></div><div style="position:absolute;left:20.5px;top:10px;width:5.5px;height:5.4px;background:#8cc2e7"></div><div style="position:absolute;left:25.6px;top:10px;width:5.5px;height:5.4px;background:#8cc2e7"></div><div style="position:absolute;left:30.8px;top:10px;width:5.5px;height:5.4px;background:#8cc2e7"></div><div style="position:absolute;left:35.9px;top:10px;width:5.5px;height:5.4px;background:#5aa7db"></div></div></div>
<div class="fx pill" style="left:192px;top:31px;width:100px;height:18px;background:#f9a74f"><span><span class="z">税后</span></span><span class="cl">:</span><span>¥</span><div style="position:absolute;left:58px;top:1.5px;width:38px;height:15px;overflow:hidden"><div style="position:absolute;left:0.0px;top:0px;width:5.2px;height:5.4px;background:#fbbd7c"></div><div style="position:absolute;left:4.8px;top:0px;width:5.2px;height:5.4px;background:#fdd0a0"></div><div style="position:absolute;left:9.5px;top:0px;width:5.2px;height:5.4px;background:#fbbd7c"></div><div style="position:absolute;left:14.2px;top:0px;width:5.2px;height:5.4px;background:#fdd0a0"></div><div style="position:absolute;left:19.0px;top:0px;width:5.2px;height:5.4px;background:#fccb94"></div><div style="position:absolute;left:23.8px;top:0px;width:5.2px;height:5.4px;background:#fee2c2"></div><div style="position:absolute;left:28.5px;top:0px;width:5.2px;height:5.4px;background:#fee2c2"></div><div style="position:absolute;left:33.2px;top:0px;width:5.2px;height:5.4px;background:#fcc58a"></div><div style="position:absolute;left:0.0px;top:5px;width:5.2px;height:5.4px;background:#fdd0a0"></div><div style="position:absolute;left:4.8px;top:5px;width:5.2px;height:5.4px;background:#fccb94"></div><div style="position:absolute;left:9.5px;top:5px;width:5.2px;height:5.4px;background:#fcc58a"></div><div style="position:absolute;left:14.2px;top:5px;width:5.2px;height:5.4px;background:#fbbd7c"></div><div style="position:absolute;left:19.0px;top:5px;width:5.2px;height:5.4px;background:#fbbd7c"></div><div style="position:absolute;left:23.8px;top:5px;width:5.2px;height:5.4px;background:#fee2c2"></div><div style="position:absolute;left:28.5px;top:5px;width:5.2px;height:5.4px;background:#fee2c2"></div><div style="position:absolute;left:33.2px;top:5px;width:5.2px;height:5.4px;background:#fdd0a0"></div><div style="position:absolute;left:0.0px;top:10px;width:5.2px;height:5.4px;background:#fbbd7c"></div><div style="position:absolute;left:4.8px;top:10px;width:5.2px;height:5.4px;background:#fccb94"></div><div style="position:absolute;left:9.5px;top:10px;width:5.2px;height:5.4px;background:#fdd0a0"></div><div style="position:absolute;left:14.2px;top:10px;width:5.2px;height:5.4px;background:#fbbd7c"></div><div style="position:absolute;left:19.0px;top:10px;width:5.2px;height:5.4px;background:#fccb94"></div><div style="position:absolute;left:23.8px;top:10px;width:5.2px;height:5.4px;background:#fbbd7c"></div><div style="position:absolute;left:28.5px;top:10px;width:5.2px;height:5.4px;background:#fdd0a0"></div><div style="position:absolute;left:33.2px;top:10px;width:5.2px;height:5.4px;background:#fbbd7c"></div></div></div>
<div class="prow" style="top:54px;height:27px"></div>
<div class="pl" style="left:5px;top:59px"><span class="z">二条（原创）</span></div>
<div class="fx pill" style="left:88px;top:58px;width:100px;height:18px;background:#1c84c6"><span><span class="z">税前</span></span><span class="cl">:</span><span>¥</span><div style="position:absolute;left:53px;top:1.5px;width:41px;height:15px;overflow:hidden"><div style="position:absolute;left:0.0px;top:0px;width:5.5px;height:5.4px;background:#8cc2e7"></div><div style="position:absolute;left:5.1px;top:0px;width:5.5px;height:5.4px;background:#8cc2e7"></div><div style="position:absolute;left:10.2px;top:0px;width:5.5px;height:5.4px;background:#6ab0df"></div><div style="position:absolute;left:15.4px;top:0px;width:5.5px;height:5.4px;background:#b3d7f0"></div><div style="position:absolute;left:20.5px;top:0px;width:5.5px;height:5.4px;background:#7db9e4"></div><div style="position:absolute;left:25.6px;top:0px;width:5.5px;height:5.4px;background:#8cc2e7"></div><div style="position:absolute;left:30.8px;top:0px;width:5.5px;height:5.4px;background:#5aa7db"></div><div style="position:absolute;left:35.9px;top:0px;width:5.5px;height:5.4px;background:#6ab0df"></div><div style="position:absolute;left:0.0px;top:5px;width:5.5px;height:5.4px;background:#5aa7db"></div><div style="position:absolute;left:5.1px;top:5px;width:5.5px;height:5.4px;background:#5aa7db"></div><div style="position:absolute;left:10.2px;top:5px;width:5.5px;height:5.4px;background:#a4cfed"></div><div style="position:absolute;left:15.4px;top:5px;width:5.5px;height:5.4px;background:#6ab0df"></div><div style="position:absolute;left:20.5px;top:5px;width:5.5px;height:5.4px;background:#8cc2e7"></div><div style="position:absolute;left:25.6px;top:5px;width:5.5px;height:5.4px;background:#a4cfed"></div><div style="position:absolute;left:30.8px;top:5px;width:5.5px;height:5.4px;background:#6ab0df"></div><div style="position:absolute;left:35.9px;top:5px;width:5.5px;height:5.4px;background:#a4cfed"></div><div style="position:absolute;left:0.0px;top:10px;width:5.5px;height:5.4px;background:#b3d7f0"></div><div style="position:absolute;left:5.1px;top:10px;width:5.5px;height:5.4px;background:#8cc2e7"></div><div style="position:absolute;left:10.2px;top:10px;width:5.5px;height:5.4px;background:#b3d7f0"></div><div style="position:absolute;left:15.4px;top:10px;width:5.5px;height:5.4px;background:#5aa7db"></div><div style="position:absolute;left:20.5px;top:10px;width:5.5px;height:5.4px;background:#5aa7db"></div><div style="position:absolute;left:25.6px;top:10px;width:5.5px;height:5.4px;background:#7db9e4"></div><div style="position:absolute;left:30.8px;top:10px;width:5.5px;height:5.4px;background:#5aa7db"></div><div style="position:absolute;left:35.9px;top:10px;width:5.5px;height:5.4px;background:#6ab0df"></div></div></div>
<div class="fx pill" style="left:192px;top:58px;width:100px;height:18px;background:#f9a74f"><span><span class="z">税后</span></span><span class="cl">:</span><span>¥</span><div style="position:absolute;left:58px;top:1.5px;width:38px;height:15px;overflow:hidden"><div style="position:absolute;left:0.0px;top:0px;width:5.2px;height:5.4px;background:#fbbd7c"></div><div style="position:absolute;left:4.8px;top:0px;width:5.2px;height:5.4px;background:#fccb94"></div><div style="position:absolute;left:9.5px;top:0px;width:5.2px;height:5.4px;background:#fbbd7c"></div><div style="position:absolute;left:14.2px;top:0px;width:5.2px;height:5.4px;background:#fddab4"></div><div style="position:absolute;left:19.0px;top:0px;width:5.2px;height:5.4px;background:#fddab4"></div><div style="position:absolute;left:23.8px;top:0px;width:5.2px;height:5.4px;background:#fdd0a0"></div><div style="position:absolute;left:28.5px;top:0px;width:5.2px;height:5.4px;background:#fcc58a"></div><div style="position:absolute;left:33.2px;top:0px;width:5.2px;height:5.4px;background:#fcc58a"></div><div style="position:absolute;left:0.0px;top:5px;width:5.2px;height:5.4px;background:#fddab4"></div><div style="position:absolute;left:4.8px;top:5px;width:5.2px;height:5.4px;background:#fee2c2"></div><div style="position:absolute;left:9.5px;top:5px;width:5.2px;height:5.4px;background:#fddab4"></div><div style="position:absolute;left:14.2px;top:5px;width:5.2px;height:5.4px;background:#fddab4"></div><div style="position:absolute;left:19.0px;top:5px;width:5.2px;height:5.4px;background:#fddab4"></div><div style="position:absolute;left:23.8px;top:5px;width:5.2px;height:5.4px;background:#fccb94"></div><div style="position:absolute;left:28.5px;top:5px;width:5.2px;height:5.4px;background:#fdd0a0"></div><div style="position:absolute;left:33.2px;top:5px;width:5.2px;height:5.4px;background:#fdd0a0"></div><div style="position:absolute;left:0.0px;top:10px;width:5.2px;height:5.4px;background:#fdd0a0"></div><div style="position:absolute;left:4.8px;top:10px;width:5.2px;height:5.4px;background:#fccb94"></div><div style="position:absolute;left:9.5px;top:10px;width:5.2px;height:5.4px;background:#fcc58a"></div><div style="position:absolute;left:14.2px;top:10px;width:5.2px;height:5.4px;background:#fbbd7c"></div><div style="position:absolute;left:19.0px;top:10px;width:5.2px;height:5.4px;background:#fbbd7c"></div><div style="position:absolute;left:23.8px;top:10px;width:5.2px;height:5.4px;background:#fee2c2"></div><div style="position:absolute;left:28.5px;top:10px;width:5.2px;height:5.4px;background:#fbbd7c"></div><div style="position:absolute;left:33.2px;top:10px;width:5.2px;height:5.4px;background:#fcc58a"></div></div></div>
<div class="prow" style="top:81px;height:27px"></div>
<div class="pl" style="left:5px;top:86px"><span class="z">二条</span></div>
<div class="fx pill" style="left:88px;top:85px;width:100px;height:18px;background:#1c84c6"><span><span class="z">税前</span></span><span class="cl">:</span><span>¥</span><div style="position:absolute;left:53px;top:1.5px;width:41px;height:15px;overflow:hidden"><div style="position:absolute;left:0.0px;top:0px;width:5.5px;height:5.4px;background:#a4cfed"></div><div style="position:absolute;left:5.1px;top:0px;width:5.5px;height:5.4px;background:#6ab0df"></div><div style="position:absolute;left:10.2px;top:0px;width:5.5px;height:5.4px;background:#6ab0df"></div><div style="position:absolute;left:15.4px;top:0px;width:5.5px;height:5.4px;background:#b3d7f0"></div><div style="position:absolute;left:20.5px;top:0px;width:5.5px;height:5.4px;background:#a4cfed"></div><div style="position:absolute;left:25.6px;top:0px;width:5.5px;height:5.4px;background:#7db9e4"></div><div style="position:absolute;left:30.8px;top:0px;width:5.5px;height:5.4px;background:#7db9e4"></div><div style="position:absolute;left:35.9px;top:0px;width:5.5px;height:5.4px;background:#b3d7f0"></div><div style="position:absolute;left:0.0px;top:5px;width:5.5px;height:5.4px;background:#a4cfed"></div><div style="position:absolute;left:5.1px;top:5px;width:5.5px;height:5.4px;background:#8cc2e7"></div><div style="position:absolute;left:10.2px;top:5px;width:5.5px;height:5.4px;background:#5aa7db"></div><div style="position:absolute;left:15.4px;top:5px;width:5.5px;height:5.4px;background:#8cc2e7"></div><div style="position:absolute;left:20.5px;top:5px;width:5.5px;height:5.4px;background:#a4cfed"></div><div style="position:absolute;left:25.6px;top:5px;width:5.5px;height:5.4px;background:#7db9e4"></div><div style="position:absolute;left:30.8px;top:5px;width:5.5px;height:5.4px;background:#6ab0df"></div><div style="position:absolute;left:35.9px;top:5px;width:5.5px;height:5.4px;background:#8cc2e7"></div><div style="position:absolute;left:0.0px;top:10px;width:5.5px;height:5.4px;background:#b3d7f0"></div><div style="position:absolute;left:5.1px;top:10px;width:5.5px;height:5.4px;background:#7db9e4"></div><div style="position:absolute;left:10.2px;top:10px;width:5.5px;height:5.4px;background:#6ab0df"></div><div style="position:absolute;left:15.4px;top:10px;width:5.5px;height:5.4px;background:#6ab0df"></div><div style="position:absolute;left:20.5px;top:10px;width:5.5px;height:5.4px;background:#6ab0df"></div><div style="position:absolute;left:25.6px;top:10px;width:5.5px;height:5.4px;background:#5aa7db"></div><div style="position:absolute;left:30.8px;top:10px;width:5.5px;height:5.4px;background:#7db9e4"></div><div style="position:absolute;left:35.9px;top:10px;width:5.5px;height:5.4px;background:#7db9e4"></div></div></div>
<div class="fx pill" style="left:192px;top:85px;width:100px;height:18px;background:#f9a74f"><span><span class="z">税后</span></span><span class="cl">:</span><span>¥</span><div style="position:absolute;left:58px;top:1.5px;width:38px;height:15px;overflow:hidden"><div style="position:absolute;left:0.0px;top:0px;width:5.2px;height:5.4px;background:#fcc58a"></div><div style="position:absolute;left:4.8px;top:0px;width:5.2px;height:5.4px;background:#fbbd7c"></div><div style="position:absolute;left:9.5px;top:0px;width:5.2px;height:5.4px;background:#fdd0a0"></div><div style="position:absolute;left:14.2px;top:0px;width:5.2px;height:5.4px;background:#fee2c2"></div><div style="position:absolute;left:19.0px;top:0px;width:5.2px;height:5.4px;background:#fee2c2"></div><div style="position:absolute;left:23.8px;top:0px;width:5.2px;height:5.4px;background:#fbbd7c"></div><div style="position:absolute;left:28.5px;top:0px;width:5.2px;height:5.4px;background:#fdd0a0"></div><div style="position:absolute;left:33.2px;top:0px;width:5.2px;height:5.4px;background:#fdd0a0"></div><div style="position:absolute;left:0.0px;top:5px;width:5.2px;height:5.4px;background:#fdd0a0"></div><div style="position:absolute;left:4.8px;top:5px;width:5.2px;height:5.4px;background:#fbbd7c"></div><div style="position:absolute;left:9.5px;top:5px;width:5.2px;height:5.4px;background:#fccb94"></div><div style="position:absolute;left:14.2px;top:5px;width:5.2px;height:5.4px;background:#fccb94"></div><div style="position:absolute;left:19.0px;top:5px;width:5.2px;height:5.4px;background:#fdd0a0"></div><div style="position:absolute;left:23.8px;top:5px;width:5.2px;height:5.4px;background:#fdd0a0"></div><div style="position:absolute;left:28.5px;top:5px;width:5.2px;height:5.4px;background:#fdd0a0"></div><div style="position:absolute;left:33.2px;top:5px;width:5.2px;height:5.4px;background:#fccb94"></div><div style="position:absolute;left:0.0px;top:10px;width:5.2px;height:5.4px;background:#fdd0a0"></div><div style="position:absolute;left:4.8px;top:10px;width:5.2px;height:5.4px;background:#fdd0a0"></div><div style="position:absolute;left:9.5px;top:10px;width:5.2px;height:5.4px;background:#fee2c2"></div><div style="position:absolute;left:14.2px;top:10px;width:5.2px;height:5.4px;background:#fdd0a0"></div><div style="position:absolute;left:19.0px;top:10px;width:5.2px;height:5.4px;background:#fdd0a0"></div><div style="position:absolute;left:23.8px;top:10px;width:5.2px;height:5.4px;background:#fcc58a"></div><div style="position:absolute;left:28.5px;top:10px;width:5.2px;height:5.4px;background:#fccb94"></div><div style="position:absolute;left:33.2px;top:10px;width:5.2px;height:5.4px;background:#fdd0a0"></div></div></div>
<div class="pl" style="left:5px;top:113px"><span class="z">价格有效期</span></div>
<div class="fx pill" style="left:206px;top:112px;width:86px;height:18px;background:#d1dade;color:#5e5e5e;justify-content:center;padding-left:0;padding-bottom:0;font-size:14px">2018-12-31</div>
</div>
<div class="pbox" style="left:982px;top:640px;width:101px;height:80px">
<div class="prow" style="top:0px;height:27px"></div>
<div class="pl" style="left:5px;top:6px"><span class="z">保价期</span></div>
<div class="fx pill" style="left:45px;top:4px;width:50px;height:18px;background:#1c84c6;justify-content:center;padding-left:0"><span class="z">三个月</span></div>
<div class="prow" style="top:26px;height:27px"></div>
<div class="pl" style="left:5px;top:33px"><span class="z">是否预付</span></div>
<div class="fx pill" style="left:71px;top:31px;width:24px;height:18px;background:#1c84c6;justify-content:center;padding-left:0"><span class="z">否</span></div>
<div class="pl" style="left:5px;top:60px"><span class="z">品牌提供</span></div>
<div class="fx pill" style="left:71px;top:58px;width:24px;height:18px;background:#1c84c6;justify-content:center;padding-left:0"><span class="z">是</span></div>
</div>
<div class="fx ob" style="left:1185px;top:675px;width:81px;height:29px;border-color:#ee4b5e;color:#ee4b5e"><span style="margin-right:4px"><svg width="11" height="11" viewBox="0 0 12 12" style="display:block;"><path d="M6 1 L7.4 4.3 L11 4.6 L8.3 7 L9.1 10.6 L6 8.7 L2.9 10.6 L3.7 7 L1 4.6 L4.6 4.3 Z" fill="none" stroke="#ee4b5e" stroke-width="1.1" stroke-linejoin="round"/></svg></span><span class="z">加入分组</span></div>
</body>
</html>
